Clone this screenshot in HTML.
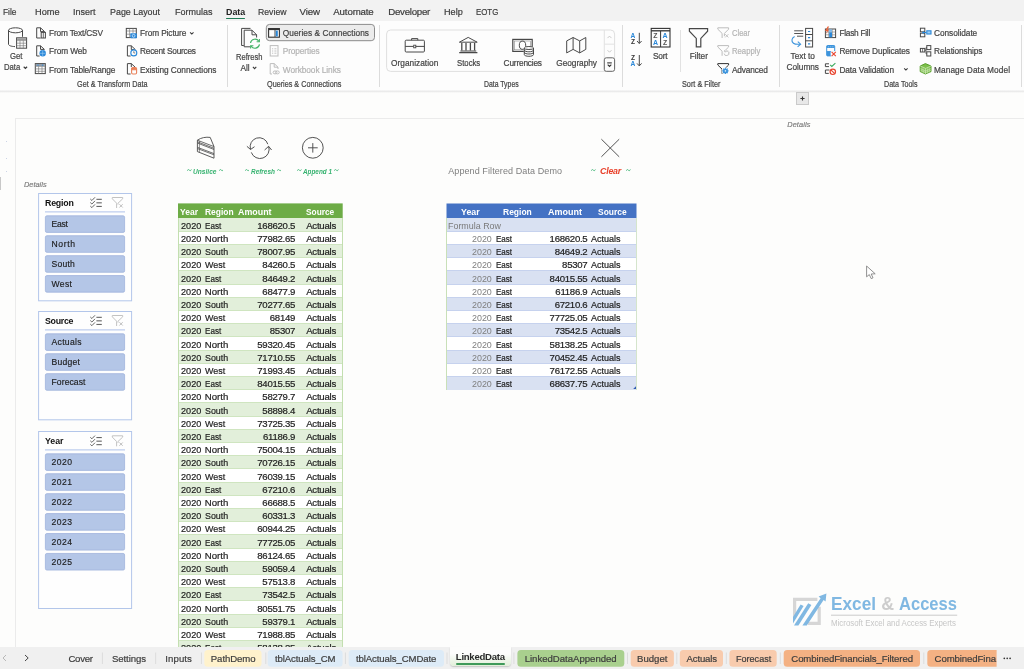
<!DOCTYPE html>
<html><head><meta charset="utf-8"><title>Excel</title>
<style>
html,body{margin:0;padding:0}
body{width:1024px;height:669px;overflow:hidden;position:relative;background:#fdfdfc;font-family:"Liberation Sans",sans-serif;}
.a{position:absolute;display:block}
.t{position:absolute;white-space:pre;line-height:1;display:block}
</style></head><body><div id="w" style="position:absolute;left:0;top:0;width:1024px;height:669px;will-change:transform">
<div class="a" style="left:0px;top:0px;width:1024px;height:21.4px;background:#f2f2f2;"></div>
<div class="a" style="left:0px;top:21.4px;width:1024px;height:70px;background:#fdfdfd;"></div>
<div class="a" style="left:0px;top:90.4px;width:1024px;height:3px;background:linear-gradient(#fdfdfd,#e7e7e7 40%,#f1f1f1 65%,#fdfdfc)"></div>
<div class="a" style="left:15px;top:118px;width:1009px;height:1px;background:#ebebeb;"></div>
<div class="a" style="left:15px;top:118px;width:1px;height:529px;background:#ebebeb;"></div>
<span class="t" style="left:2.50px;top:6.79px;font-size:9.7px;color:#3b3b3b;-webkit-text-stroke:0.2px;transform:scaleX(0.8640);transform-origin:0 0;">File</span>
<span class="t" style="left:34.50px;top:6.79px;font-size:9.7px;color:#3b3b3b;-webkit-text-stroke:0.2px;transform:scaleX(0.9480);transform-origin:0 0;">Home</span>
<span class="t" style="left:73.00px;top:6.79px;font-size:9.7px;color:#3b3b3b;-webkit-text-stroke:0.2px;transform:scaleX(0.9284);transform-origin:0 0;">Insert</span>
<span class="t" style="left:110.00px;top:6.79px;font-size:9.7px;color:#3b3b3b;-webkit-text-stroke:0.2px;transform:scaleX(0.9190);transform-origin:0 0;">Page Layout</span>
<span class="t" style="left:174.50px;top:6.79px;font-size:9.7px;color:#3b3b3b;-webkit-text-stroke:0.2px;transform:scaleX(0.9288);transform-origin:0 0;">Formulas</span>
<span class="t" style="left:258.25px;top:6.79px;font-size:9.7px;color:#3b3b3b;-webkit-text-stroke:0.2px;transform:scaleX(0.8972);transform-origin:0 0;">Review</span>
<span class="t" style="left:299.50px;top:6.79px;font-size:9.7px;color:#3b3b3b;-webkit-text-stroke:0.2px;letter-spacing:-0.109px;">View</span>
<span class="t" style="left:333.25px;top:6.79px;font-size:9.7px;color:#3b3b3b;-webkit-text-stroke:0.2px;letter-spacing:-0.138px;">Automate</span>
<span class="t" style="left:388.25px;top:6.79px;font-size:9.7px;color:#3b3b3b;-webkit-text-stroke:0.2px;letter-spacing:-0.271px;">Developer</span>
<span class="t" style="left:443.75px;top:6.79px;font-size:9.7px;color:#3b3b3b;-webkit-text-stroke:0.2px;transform:scaleX(0.9404);transform-origin:0 0;">Help</span>
<span class="t" style="left:475.75px;top:6.79px;font-size:9.7px;color:#3b3b3b;-webkit-text-stroke:0.2px;transform:scaleX(0.8105);transform-origin:0 0;">EOTG</span>
<span class="t" style="left:225.75px;top:6.79px;font-size:9.7px;color:#222;font-weight:700;transform:scaleX(0.9167);transform-origin:0 0;">Data</span>
<div class="a" style="left:226px;top:17.5px;width:19px;height:1.2px;background:#1f7a55;border-radius:1px;"></div>
<span class="t" style="left:9.75px;top:51.97px;font-size:8.3px;color:#444;-webkit-text-stroke:0.2px;transform:scaleX(0.9346);transform-origin:0 0;">Get</span>
<span class="t" style="left:3.75px;top:62.97px;font-size:8.3px;color:#444;-webkit-text-stroke:0.2px;transform:scaleX(0.9269);transform-origin:0 0;">Data</span>
<span class="t" style="left:49.00px;top:29.37px;font-size:8.3px;color:#444;-webkit-text-stroke:0.2px;letter-spacing:-0.174px;">From Text/CSV</span>
<span class="t" style="left:49.00px;top:47.37px;font-size:8.3px;color:#444;-webkit-text-stroke:0.2px;letter-spacing:-0.097px;">From Web</span>
<span class="t" style="left:49.00px;top:65.57px;font-size:8.3px;color:#444;-webkit-text-stroke:0.2px;letter-spacing:-0.124px;">From Table/Range</span>
<span class="t" style="left:140.00px;top:29.37px;font-size:8.3px;color:#444;-webkit-text-stroke:0.2px;letter-spacing:-0.099px;">From Picture</span>
<span class="t" style="left:140.00px;top:47.37px;font-size:8.3px;color:#444;-webkit-text-stroke:0.2px;letter-spacing:-0.233px;">Recent Sources</span>
<span class="t" style="left:140.00px;top:65.57px;font-size:8.3px;color:#444;-webkit-text-stroke:0.2px;letter-spacing:-0.057px;">Existing Connections</span>
<span class="t" style="left:76.50px;top:79.97px;font-size:8.3px;color:#444;-webkit-text-stroke:0.2px;transform:scaleX(0.8736);transform-origin:0 0;">Get &amp; Transform Data</span>
<div class="a" style="left:227px;top:25px;width:1px;height:62px;background:#dcdcdc;"></div>
<span class="t" style="left:235.50px;top:52.97px;font-size:8.3px;color:#444;-webkit-text-stroke:0.2px;transform:scaleX(0.9118);transform-origin:0 0;">Refresh</span>
<span class="t" style="left:240.50px;top:63.87px;font-size:8.3px;color:#444;-webkit-text-stroke:0.2px;letter-spacing:-0.067px;">All</span>
<svg class="a" style="left:260px;top:20px" width="120" height="25" viewBox="0 0 120 25" fill="none"><rect x="6.3" y="4.4" width="108.2" height="16.3" rx="3.3" fill="#ececec" stroke="#8c8c8c" stroke-width="1"/></svg>
<span class="t" style="left:282.75px;top:29.37px;font-size:8.3px;color:#444;-webkit-text-stroke:0.2px;letter-spacing:0.046px;">Queries &amp; Connections</span>
<span class="t" style="left:282.75px;top:47.37px;font-size:8.3px;color:#b4b4b4;-webkit-text-stroke:0.2px;letter-spacing:-0.109px;">Properties</span>
<span class="t" style="left:282.75px;top:65.57px;font-size:8.3px;color:#b4b4b4;-webkit-text-stroke:0.2px;letter-spacing:-0.056px;">Workbook Links</span>
<span class="t" style="left:266.50px;top:79.97px;font-size:8.3px;color:#444;-webkit-text-stroke:0.2px;transform:scaleX(0.8719);transform-origin:0 0;">Queries &amp; Connections</span>
<div class="a" style="left:379px;top:25px;width:1px;height:62px;background:#dcdcdc;"></div>
<svg class="a" style="left:380px;top:25px" width="240" height="50" viewBox="0 0 240 50" fill="none"><rect x="6.6" y="5" width="228" height="41.4" rx="4" fill="#fdfdfd" stroke="#dfdfdf" stroke-width="1"/><path d="M224.3 5V46.4M224.3 19.2H234.6" stroke="#e2e2e2" stroke-width="1"/><rect x="224.3" y="32.8" width="10.3" height="13.5" rx="2" fill="#fdfdfd" stroke="#666" stroke-width="1"/></svg>
<span class="t" style="left:391.00px;top:58.77px;font-size:8.3px;color:#444;-webkit-text-stroke:0.2px;letter-spacing:0.018px;">Organization</span>
<span class="t" style="left:457.00px;top:58.77px;font-size:8.3px;color:#444;-webkit-text-stroke:0.2px;transform:scaleX(0.9335);transform-origin:0 0;">Stocks</span>
<span class="t" style="left:503.60px;top:58.77px;font-size:8.3px;color:#444;-webkit-text-stroke:0.2px;letter-spacing:-0.192px;">Currencies</span>
<span class="t" style="left:556.25px;top:58.77px;font-size:8.3px;color:#444;-webkit-text-stroke:0.2px;letter-spacing:-0.039px;">Geography</span>
<span class="t" style="left:483.60px;top:79.97px;font-size:8.3px;color:#444;-webkit-text-stroke:0.2px;transform:scaleX(0.8284);transform-origin:0 0;">Data Types</span>
<div class="a" style="left:622px;top:25px;width:1px;height:62px;background:#dcdcdc;"></div>
<span class="t" style="left:653.00px;top:51.97px;font-size:8.3px;color:#444;-webkit-text-stroke:0.2px;letter-spacing:-0.240px;">Sort</span>
<span class="t" style="left:689.75px;top:51.97px;font-size:8.3px;color:#444;-webkit-text-stroke:0.2px;letter-spacing:-0.058px;">Filter</span>
<div class="a" style="left:679.5px;top:29.5px;width:1px;height:42.5px;background:#e2e2e2;"></div>
<span class="t" style="left:731.90px;top:29.37px;font-size:8.3px;color:#b4b4b4;-webkit-text-stroke:0.2px;transform:scaleX(0.9128);transform-origin:0 0;">Clear</span>
<span class="t" style="left:731.90px;top:47.37px;font-size:8.3px;color:#b4b4b4;-webkit-text-stroke:0.2px;transform:scaleX(0.9309);transform-origin:0 0;">Reapply</span>
<span class="t" style="left:731.90px;top:65.57px;font-size:8.3px;color:#444;-webkit-text-stroke:0.2px;letter-spacing:-0.115px;">Advanced</span>
<span class="t" style="left:681.50px;top:79.97px;font-size:8.3px;color:#444;-webkit-text-stroke:0.2px;transform:scaleX(0.8787);transform-origin:0 0;">Sort &amp; Filter</span>
<div class="a" style="left:779px;top:25px;width:1px;height:62px;background:#dcdcdc;"></div>
<span class="t" style="left:790.60px;top:51.97px;font-size:8.3px;color:#444;-webkit-text-stroke:0.2px;letter-spacing:-0.009px;">Text to</span>
<span class="t" style="left:786.50px;top:63.27px;font-size:8.3px;color:#444;-webkit-text-stroke:0.2px;letter-spacing:-0.042px;">Columns</span>
<span class="t" style="left:839.40px;top:29.37px;font-size:8.3px;color:#444;-webkit-text-stroke:0.2px;letter-spacing:-0.261px;">Flash Fill</span>
<span class="t" style="left:839.40px;top:47.37px;font-size:8.3px;color:#444;-webkit-text-stroke:0.2px;letter-spacing:-0.084px;">Remove Duplicates</span>
<span class="t" style="left:839.40px;top:65.57px;font-size:8.3px;color:#444;-webkit-text-stroke:0.2px;letter-spacing:-0.075px;">Data Validation</span>
<span class="t" style="left:934.00px;top:29.37px;font-size:8.3px;color:#444;-webkit-text-stroke:0.2px;letter-spacing:-0.058px;">Consolidate</span>
<span class="t" style="left:934.00px;top:47.37px;font-size:8.3px;color:#444;-webkit-text-stroke:0.2px;letter-spacing:-0.109px;">Relationships</span>
<span class="t" style="left:934.00px;top:65.57px;font-size:8.3px;color:#444;-webkit-text-stroke:0.2px;letter-spacing:0.080px;">Manage Data Model</span>
<span class="t" style="left:883.50px;top:79.97px;font-size:8.3px;color:#444;-webkit-text-stroke:0.2px;transform:scaleX(0.8576);transform-origin:0 0;">Data Tools</span>
<div class="a" style="left:1021px;top:25px;width:1px;height:62px;background:#dcdcdc;"></div>
<div class="a" style="left:796px;top:92px;width:13px;height:13px;background:#e8e8e8;border:1px solid #cacaca;box-sizing:border-box;"></div>
<svg class="a" style="left:800px;top:95.7px" width="5" height="5" viewBox="0 0 5 5" fill="none"><path d="M2.5 0.4V4.6M0.4 2.5H4.6" stroke="#333" stroke-width="1.1"/></svg>
<span class="t" style="left:24.00px;top:180.54px;font-size:7.4px;color:#7a7a7a;font-style:italic;-webkit-text-stroke:0.15px;">Details</span>
<span class="t" style="left:787.20px;top:121.44px;font-size:7.4px;color:#7a7a7a;font-style:italic;-webkit-text-stroke:0.15px;letter-spacing:0.118px;">Details</span>
<div class="a" style="left:0px;top:177px;width:1px;height:13px;background:#c8c8c8;"></div>
<div class="a" style="left:6px;top:141px;width:1px;height:1px;background:#ccd4e6;"></div>
<div class="a" style="left:6px;top:157.5px;width:1px;height:1px;background:#ccd4e6;"></div>
<div class="a" style="left:6px;top:170.5px;width:1px;height:1px;background:#ccd4e6;"></div>
<svg class="a" style="left:187px;top:169.2px" width="4.6" height="2.4" viewBox="0 0 4.6 2.4" fill="none"><path d="M0.2 1.7C0.9 0.3 1.7 0.3 2.3 1.1S3.7 2 4.4 0.5" stroke="#35b26f" stroke-width="0.9"/></svg>
<svg class="a" style="left:218.6px;top:169.2px" width="4.6" height="2.4" viewBox="0 0 4.6 2.4" fill="none"><path d="M0.2 1.7C0.9 0.3 1.7 0.3 2.3 1.1S3.7 2 4.4 0.5" stroke="#35b26f" stroke-width="0.9"/></svg>
<span class="t" style="left:193.30px;top:167.63px;font-size:8px;color:#35b26f;font-weight:700;font-style:italic;transform:scaleX(0.8255);transform-origin:0 0;">Unslice</span>
<svg class="a" style="left:244.8px;top:169.2px" width="4.6" height="2.4" viewBox="0 0 4.6 2.4" fill="none"><path d="M0.2 1.7C0.9 0.3 1.7 0.3 2.3 1.1S3.7 2 4.4 0.5" stroke="#35b26f" stroke-width="0.9"/></svg>
<svg class="a" style="left:276.90000000000003px;top:169.2px" width="4.6" height="2.4" viewBox="0 0 4.6 2.4" fill="none"><path d="M0.2 1.7C0.9 0.3 1.7 0.3 2.3 1.1S3.7 2 4.4 0.5" stroke="#35b26f" stroke-width="0.9"/></svg>
<span class="t" style="left:251.10px;top:167.63px;font-size:8px;color:#35b26f;font-weight:700;font-style:italic;transform:scaleX(0.8021);transform-origin:0 0;">Refresh</span>
<svg class="a" style="left:297px;top:169.2px" width="4.6" height="2.4" viewBox="0 0 4.6 2.4" fill="none"><path d="M0.2 1.7C0.9 0.3 1.7 0.3 2.3 1.1S3.7 2 4.4 0.5" stroke="#35b26f" stroke-width="0.9"/></svg>
<svg class="a" style="left:334.20000000000005px;top:169.2px" width="4.6" height="2.4" viewBox="0 0 4.6 2.4" fill="none"><path d="M0.2 1.7C0.9 0.3 1.7 0.3 2.3 1.1S3.7 2 4.4 0.5" stroke="#35b26f" stroke-width="0.9"/></svg>
<span class="t" style="left:303.30px;top:167.63px;font-size:8px;color:#35b26f;font-weight:700;font-style:italic;transform:scaleX(0.7955);transform-origin:0 0;">Append 1</span>
<span class="t" style="left:448.20px;top:166.58px;font-size:9px;color:#7e7e7e;letter-spacing:0.093px;">Append Filtered Data Demo</span>
<svg class="a" style="left:591.3px;top:169.2px" width="4.6" height="2.4" viewBox="0 0 4.6 2.4" fill="none"><path d="M0.2 1.7C0.9 0.3 1.7 0.3 2.3 1.1S3.7 2 4.4 0.5" stroke="#35b26f" stroke-width="0.9"/></svg>
<svg class="a" style="left:626.2px;top:169.2px" width="4.6" height="2.4" viewBox="0 0 4.6 2.4" fill="none"><path d="M0.2 1.7C0.9 0.3 1.7 0.3 2.3 1.1S3.7 2 4.4 0.5" stroke="#35b26f" stroke-width="0.9"/></svg>
<span class="t" style="left:600.10px;top:166.90px;font-size:8.8px;color:#e8402a;font-weight:700;font-style:italic;letter-spacing:-0.254px;">Clear</span>
<svg class="a" style="left:38px;top:192.5px" width="95" height="109.30000000000001" viewBox="0 0 95 109.30000000000001" fill="none"><rect x="0.6" y="0.5" width="93" height="107.3" fill="#fefefe" stroke="#b3c6ea" stroke-width="1"/><rect x="7" y="18.1" width="80" height="1.5" fill="#c9d6f1"/><rect x="7.4" y="22.80" width="79.2" height="16.6" rx="1.5" fill="#b4c6e7" stroke="#9fb3dc" stroke-width="0.8"/><rect x="7.4" y="42.73" width="79.2" height="16.6" rx="1.5" fill="#b4c6e7" stroke="#9fb3dc" stroke-width="0.8"/><rect x="7.4" y="62.66" width="79.2" height="16.6" rx="1.5" fill="#b4c6e7" stroke="#9fb3dc" stroke-width="0.8"/><rect x="7.4" y="82.59" width="79.2" height="16.6" rx="1.5" fill="#b4c6e7" stroke="#9fb3dc" stroke-width="0.8"/></svg>
<span class="t" style="left:45.00px;top:198.55px;font-size:8.8px;color:#111;font-weight:700;letter-spacing:-0.202px;">Region</span>
<span class="t" style="left:51.50px;top:220.12px;font-size:8.6px;color:#1c1c1c;-webkit-text-stroke:0.15px;letter-spacing:-0.234px;">East</span>
<span class="t" style="left:51.50px;top:240.05px;font-size:8.6px;color:#1c1c1c;-webkit-text-stroke:0.15px;letter-spacing:0.621px;">North</span>
<span class="t" style="left:51.50px;top:259.98px;font-size:8.6px;color:#1c1c1c;-webkit-text-stroke:0.15px;letter-spacing:0.208px;">South</span>
<span class="t" style="left:51.50px;top:279.91px;font-size:8.6px;color:#1c1c1c;-webkit-text-stroke:0.15px;letter-spacing:0.359px;">West</span>
<svg class="a" style="left:38px;top:310.5px" width="95" height="110.30000000000001" viewBox="0 0 95 110.30000000000001" fill="none"><rect x="0.6" y="0.5" width="93" height="108.3" fill="#fefefe" stroke="#b3c6ea" stroke-width="1"/><rect x="7" y="18.1" width="80" height="1.5" fill="#c9d6f1"/><rect x="7.4" y="22.80" width="79.2" height="16.6" rx="1.5" fill="#b4c6e7" stroke="#9fb3dc" stroke-width="0.8"/><rect x="7.4" y="42.73" width="79.2" height="16.6" rx="1.5" fill="#b4c6e7" stroke="#9fb3dc" stroke-width="0.8"/><rect x="7.4" y="62.66" width="79.2" height="16.6" rx="1.5" fill="#b4c6e7" stroke="#9fb3dc" stroke-width="0.8"/></svg>
<span class="t" style="left:45.00px;top:316.55px;font-size:8.8px;color:#111;font-weight:700;letter-spacing:-0.266px;">Source</span>
<span class="t" style="left:51.50px;top:338.12px;font-size:8.6px;color:#1c1c1c;-webkit-text-stroke:0.15px;letter-spacing:0.302px;">Actuals</span>
<span class="t" style="left:51.50px;top:358.05px;font-size:8.6px;color:#1c1c1c;-webkit-text-stroke:0.15px;letter-spacing:0.250px;">Budget</span>
<span class="t" style="left:51.50px;top:377.98px;font-size:8.6px;color:#1c1c1c;-webkit-text-stroke:0.15px;letter-spacing:0.080px;">Forecast</span>
<svg class="a" style="left:38px;top:430.8px" width="95" height="178.99999999999994" viewBox="0 0 95 178.99999999999994" fill="none"><rect x="0.6" y="0.5" width="93" height="177.0" fill="#fefefe" stroke="#b3c6ea" stroke-width="1"/><rect x="7" y="18.1" width="80" height="1.5" fill="#c9d6f1"/><rect x="7.4" y="22.80" width="79.2" height="16.6" rx="1.5" fill="#b4c6e7" stroke="#9fb3dc" stroke-width="0.8"/><rect x="7.4" y="42.73" width="79.2" height="16.6" rx="1.5" fill="#b4c6e7" stroke="#9fb3dc" stroke-width="0.8"/><rect x="7.4" y="62.66" width="79.2" height="16.6" rx="1.5" fill="#b4c6e7" stroke="#9fb3dc" stroke-width="0.8"/><rect x="7.4" y="82.59" width="79.2" height="16.6" rx="1.5" fill="#b4c6e7" stroke="#9fb3dc" stroke-width="0.8"/><rect x="7.4" y="102.52" width="79.2" height="16.6" rx="1.5" fill="#b4c6e7" stroke="#9fb3dc" stroke-width="0.8"/><rect x="7.4" y="122.45" width="79.2" height="16.6" rx="1.5" fill="#b4c6e7" stroke="#9fb3dc" stroke-width="0.8"/></svg>
<span class="t" style="left:45.00px;top:436.85px;font-size:8.8px;color:#111;font-weight:700;letter-spacing:-0.031px;">Year</span>
<span class="t" style="left:51.50px;top:458.42px;font-size:8.6px;color:#1c1c1c;-webkit-text-stroke:0.15px;letter-spacing:0.458px;">2020</span>
<span class="t" style="left:51.50px;top:478.35px;font-size:8.6px;color:#1c1c1c;-webkit-text-stroke:0.15px;letter-spacing:0.458px;">2021</span>
<span class="t" style="left:51.50px;top:498.28px;font-size:8.6px;color:#1c1c1c;-webkit-text-stroke:0.15px;letter-spacing:0.458px;">2022</span>
<span class="t" style="left:51.50px;top:518.21px;font-size:8.6px;color:#1c1c1c;-webkit-text-stroke:0.15px;letter-spacing:0.458px;">2023</span>
<span class="t" style="left:51.50px;top:538.14px;font-size:8.6px;color:#1c1c1c;-webkit-text-stroke:0.15px;letter-spacing:0.458px;">2024</span>
<span class="t" style="left:51.50px;top:558.07px;font-size:8.6px;color:#1c1c1c;-webkit-text-stroke:0.15px;letter-spacing:0.458px;">2025</span>
<svg class="a" style="left:178px;top:203px" width="165" height="16" viewBox="0 0 165 16" fill="none"><rect x="0" y="0.4" width="164.7" height="14.6" fill="#6dac46"/></svg>
<span class="t" style="left:180.25px;top:206.97px;font-size:9.6px;color:#fff;font-weight:700;transform:scaleX(0.8875);transform-origin:0 0;">Year</span>
<span class="t" style="left:204.70px;top:206.97px;font-size:9.6px;color:#fff;font-weight:700;transform:scaleX(0.8796);transform-origin:0 0;">Region</span>
<span class="t" style="left:237.90px;top:206.97px;font-size:9.6px;color:#fff;font-weight:700;transform:scaleX(0.9245);transform-origin:0 0;">Amount</span>
<span class="t" style="left:306.20px;top:206.97px;font-size:9.6px;color:#fff;font-weight:700;transform:scaleX(0.8669);transform-origin:0 0;">Source</span>
<div class="a" style="left:178px;top:218.0px;width:164.7px;height:13.2px;background:#e2efda;"></div>
<span class="t" style="left:180.70px;top:220.77px;font-size:9.6px;color:#1d1d1d;-webkit-text-stroke:0.2px;transform:scaleX(0.9511);transform-origin:0 0;">2020</span>
<span class="t" style="left:204.70px;top:220.77px;font-size:9.6px;color:#1d1d1d;-webkit-text-stroke:0.2px;transform:scaleX(0.8436);transform-origin:0 0;">East</span>
<span class="t" style="left:257.27px;top:220.77px;font-size:9.6px;color:#1d1d1d;-webkit-text-stroke:0.2px;letter-spacing:-0.270px;">168620.5</span>
<span class="t" style="left:306.20px;top:220.77px;font-size:9.6px;color:#1d1d1d;-webkit-text-stroke:0.2px;letter-spacing:-0.245px;">Actuals</span>
<div class="a" style="left:178px;top:231.2px;width:164.7px;height:13.2px;background:#ffffff;"></div>
<div class="a" style="left:178px;top:230.7px;width:164.7px;height:1px;background:#cfe5c0;"></div>
<span class="t" style="left:180.70px;top:233.97px;font-size:9.6px;color:#1d1d1d;-webkit-text-stroke:0.2px;transform:scaleX(0.9511);transform-origin:0 0;">2020</span>
<span class="t" style="left:204.70px;top:233.97px;font-size:9.6px;color:#1d1d1d;-webkit-text-stroke:0.2px;letter-spacing:0.058px;">North</span>
<span class="t" style="left:257.27px;top:233.97px;font-size:9.6px;color:#1d1d1d;-webkit-text-stroke:0.2px;letter-spacing:-0.270px;">77982.65</span>
<span class="t" style="left:306.20px;top:233.97px;font-size:9.6px;color:#1d1d1d;-webkit-text-stroke:0.2px;letter-spacing:-0.245px;">Actuals</span>
<div class="a" style="left:178px;top:244.4px;width:164.7px;height:13.2px;background:#e2efda;"></div>
<div class="a" style="left:178px;top:243.9px;width:164.7px;height:1px;background:#cfe5c0;"></div>
<span class="t" style="left:180.70px;top:247.17px;font-size:9.6px;color:#1d1d1d;-webkit-text-stroke:0.2px;transform:scaleX(0.9511);transform-origin:0 0;">2020</span>
<span class="t" style="left:204.70px;top:247.17px;font-size:9.6px;color:#1d1d1d;-webkit-text-stroke:0.2px;transform:scaleX(0.9251);transform-origin:0 0;">South</span>
<span class="t" style="left:257.27px;top:247.17px;font-size:9.6px;color:#1d1d1d;-webkit-text-stroke:0.2px;letter-spacing:-0.270px;">78007.95</span>
<span class="t" style="left:306.20px;top:247.17px;font-size:9.6px;color:#1d1d1d;-webkit-text-stroke:0.2px;letter-spacing:-0.245px;">Actuals</span>
<div class="a" style="left:178px;top:257.6px;width:164.7px;height:13.2px;background:#ffffff;"></div>
<div class="a" style="left:178px;top:257.1px;width:164.7px;height:1px;background:#cfe5c0;"></div>
<span class="t" style="left:180.70px;top:260.37px;font-size:9.6px;color:#1d1d1d;-webkit-text-stroke:0.2px;transform:scaleX(0.9511);transform-origin:0 0;">2020</span>
<span class="t" style="left:204.70px;top:260.37px;font-size:9.6px;color:#1d1d1d;-webkit-text-stroke:0.2px;transform:scaleX(0.9314);transform-origin:0 0;">West</span>
<span class="t" style="left:262.33px;top:260.37px;font-size:9.6px;color:#1d1d1d;-webkit-text-stroke:0.2px;letter-spacing:-0.270px;">84260.5</span>
<span class="t" style="left:306.20px;top:260.37px;font-size:9.6px;color:#1d1d1d;-webkit-text-stroke:0.2px;letter-spacing:-0.245px;">Actuals</span>
<div class="a" style="left:178px;top:270.8px;width:164.7px;height:13.2px;background:#e2efda;"></div>
<div class="a" style="left:178px;top:270.3px;width:164.7px;height:1px;background:#cfe5c0;"></div>
<span class="t" style="left:180.70px;top:273.57px;font-size:9.6px;color:#1d1d1d;-webkit-text-stroke:0.2px;transform:scaleX(0.9511);transform-origin:0 0;">2020</span>
<span class="t" style="left:204.70px;top:273.57px;font-size:9.6px;color:#1d1d1d;-webkit-text-stroke:0.2px;transform:scaleX(0.8436);transform-origin:0 0;">East</span>
<span class="t" style="left:262.33px;top:273.57px;font-size:9.6px;color:#1d1d1d;-webkit-text-stroke:0.2px;letter-spacing:-0.270px;">84649.2</span>
<span class="t" style="left:306.20px;top:273.57px;font-size:9.6px;color:#1d1d1d;-webkit-text-stroke:0.2px;letter-spacing:-0.245px;">Actuals</span>
<div class="a" style="left:178px;top:284.0px;width:164.7px;height:13.2px;background:#ffffff;"></div>
<div class="a" style="left:178px;top:283.5px;width:164.7px;height:1px;background:#cfe5c0;"></div>
<span class="t" style="left:180.70px;top:286.77px;font-size:9.6px;color:#1d1d1d;-webkit-text-stroke:0.2px;transform:scaleX(0.9511);transform-origin:0 0;">2020</span>
<span class="t" style="left:204.70px;top:286.77px;font-size:9.6px;color:#1d1d1d;-webkit-text-stroke:0.2px;letter-spacing:0.058px;">North</span>
<span class="t" style="left:262.33px;top:286.77px;font-size:9.6px;color:#1d1d1d;-webkit-text-stroke:0.2px;letter-spacing:-0.270px;">68477.9</span>
<span class="t" style="left:306.20px;top:286.77px;font-size:9.6px;color:#1d1d1d;-webkit-text-stroke:0.2px;letter-spacing:-0.245px;">Actuals</span>
<div class="a" style="left:178px;top:297.2px;width:164.7px;height:13.2px;background:#e2efda;"></div>
<div class="a" style="left:178px;top:296.7px;width:164.7px;height:1px;background:#cfe5c0;"></div>
<span class="t" style="left:180.70px;top:299.97px;font-size:9.6px;color:#1d1d1d;-webkit-text-stroke:0.2px;transform:scaleX(0.9511);transform-origin:0 0;">2020</span>
<span class="t" style="left:204.70px;top:299.97px;font-size:9.6px;color:#1d1d1d;-webkit-text-stroke:0.2px;transform:scaleX(0.9251);transform-origin:0 0;">South</span>
<span class="t" style="left:257.27px;top:299.97px;font-size:9.6px;color:#1d1d1d;-webkit-text-stroke:0.2px;letter-spacing:-0.270px;">70277.65</span>
<span class="t" style="left:306.20px;top:299.97px;font-size:9.6px;color:#1d1d1d;-webkit-text-stroke:0.2px;letter-spacing:-0.245px;">Actuals</span>
<div class="a" style="left:178px;top:310.4px;width:164.7px;height:13.2px;background:#ffffff;"></div>
<div class="a" style="left:178px;top:309.9px;width:164.7px;height:1px;background:#cfe5c0;"></div>
<span class="t" style="left:180.70px;top:313.17px;font-size:9.6px;color:#1d1d1d;-webkit-text-stroke:0.2px;transform:scaleX(0.9511);transform-origin:0 0;">2020</span>
<span class="t" style="left:204.70px;top:313.17px;font-size:9.6px;color:#1d1d1d;-webkit-text-stroke:0.2px;transform:scaleX(0.9314);transform-origin:0 0;">West</span>
<span class="t" style="left:269.79px;top:313.17px;font-size:9.6px;color:#1d1d1d;-webkit-text-stroke:0.2px;letter-spacing:-0.270px;">68149</span>
<span class="t" style="left:306.20px;top:313.17px;font-size:9.6px;color:#1d1d1d;-webkit-text-stroke:0.2px;letter-spacing:-0.245px;">Actuals</span>
<div class="a" style="left:178px;top:323.6px;width:164.7px;height:13.2px;background:#e2efda;"></div>
<div class="a" style="left:178px;top:323.1px;width:164.7px;height:1px;background:#cfe5c0;"></div>
<span class="t" style="left:180.70px;top:326.37px;font-size:9.6px;color:#1d1d1d;-webkit-text-stroke:0.2px;transform:scaleX(0.9511);transform-origin:0 0;">2020</span>
<span class="t" style="left:204.70px;top:326.37px;font-size:9.6px;color:#1d1d1d;-webkit-text-stroke:0.2px;transform:scaleX(0.8436);transform-origin:0 0;">East</span>
<span class="t" style="left:269.79px;top:326.37px;font-size:9.6px;color:#1d1d1d;-webkit-text-stroke:0.2px;letter-spacing:-0.270px;">85307</span>
<span class="t" style="left:306.20px;top:326.37px;font-size:9.6px;color:#1d1d1d;-webkit-text-stroke:0.2px;letter-spacing:-0.245px;">Actuals</span>
<div class="a" style="left:178px;top:336.8px;width:164.7px;height:13.2px;background:#ffffff;"></div>
<div class="a" style="left:178px;top:336.3px;width:164.7px;height:1px;background:#cfe5c0;"></div>
<span class="t" style="left:180.70px;top:339.57px;font-size:9.6px;color:#1d1d1d;-webkit-text-stroke:0.2px;transform:scaleX(0.9511);transform-origin:0 0;">2020</span>
<span class="t" style="left:204.70px;top:339.57px;font-size:9.6px;color:#1d1d1d;-webkit-text-stroke:0.2px;letter-spacing:0.058px;">North</span>
<span class="t" style="left:257.27px;top:339.57px;font-size:9.6px;color:#1d1d1d;-webkit-text-stroke:0.2px;letter-spacing:-0.270px;">59320.45</span>
<span class="t" style="left:306.20px;top:339.57px;font-size:9.6px;color:#1d1d1d;-webkit-text-stroke:0.2px;letter-spacing:-0.245px;">Actuals</span>
<div class="a" style="left:178px;top:350.0px;width:164.7px;height:13.2px;background:#e2efda;"></div>
<div class="a" style="left:178px;top:349.5px;width:164.7px;height:1px;background:#cfe5c0;"></div>
<span class="t" style="left:180.70px;top:352.77px;font-size:9.6px;color:#1d1d1d;-webkit-text-stroke:0.2px;transform:scaleX(0.9511);transform-origin:0 0;">2020</span>
<span class="t" style="left:204.70px;top:352.77px;font-size:9.6px;color:#1d1d1d;-webkit-text-stroke:0.2px;transform:scaleX(0.9251);transform-origin:0 0;">South</span>
<span class="t" style="left:257.27px;top:352.77px;font-size:9.6px;color:#1d1d1d;-webkit-text-stroke:0.2px;letter-spacing:-0.270px;">71710.55</span>
<span class="t" style="left:306.20px;top:352.77px;font-size:9.6px;color:#1d1d1d;-webkit-text-stroke:0.2px;letter-spacing:-0.245px;">Actuals</span>
<div class="a" style="left:178px;top:363.2px;width:164.7px;height:13.2px;background:#ffffff;"></div>
<div class="a" style="left:178px;top:362.7px;width:164.7px;height:1px;background:#cfe5c0;"></div>
<span class="t" style="left:180.70px;top:365.97px;font-size:9.6px;color:#1d1d1d;-webkit-text-stroke:0.2px;transform:scaleX(0.9511);transform-origin:0 0;">2020</span>
<span class="t" style="left:204.70px;top:365.97px;font-size:9.6px;color:#1d1d1d;-webkit-text-stroke:0.2px;transform:scaleX(0.9314);transform-origin:0 0;">West</span>
<span class="t" style="left:257.27px;top:365.97px;font-size:9.6px;color:#1d1d1d;-webkit-text-stroke:0.2px;letter-spacing:-0.270px;">71993.45</span>
<span class="t" style="left:306.20px;top:365.97px;font-size:9.6px;color:#1d1d1d;-webkit-text-stroke:0.2px;letter-spacing:-0.245px;">Actuals</span>
<div class="a" style="left:178px;top:376.4px;width:164.7px;height:13.2px;background:#e2efda;"></div>
<div class="a" style="left:178px;top:375.9px;width:164.7px;height:1px;background:#cfe5c0;"></div>
<span class="t" style="left:180.70px;top:379.17px;font-size:9.6px;color:#1d1d1d;-webkit-text-stroke:0.2px;transform:scaleX(0.9511);transform-origin:0 0;">2020</span>
<span class="t" style="left:204.70px;top:379.17px;font-size:9.6px;color:#1d1d1d;-webkit-text-stroke:0.2px;transform:scaleX(0.8436);transform-origin:0 0;">East</span>
<span class="t" style="left:257.27px;top:379.17px;font-size:9.6px;color:#1d1d1d;-webkit-text-stroke:0.2px;letter-spacing:-0.270px;">84015.55</span>
<span class="t" style="left:306.20px;top:379.17px;font-size:9.6px;color:#1d1d1d;-webkit-text-stroke:0.2px;letter-spacing:-0.245px;">Actuals</span>
<div class="a" style="left:178px;top:389.6px;width:164.7px;height:13.2px;background:#ffffff;"></div>
<div class="a" style="left:178px;top:389.1px;width:164.7px;height:1px;background:#cfe5c0;"></div>
<span class="t" style="left:180.70px;top:392.37px;font-size:9.6px;color:#1d1d1d;-webkit-text-stroke:0.2px;transform:scaleX(0.9511);transform-origin:0 0;">2020</span>
<span class="t" style="left:204.70px;top:392.37px;font-size:9.6px;color:#1d1d1d;-webkit-text-stroke:0.2px;letter-spacing:0.058px;">North</span>
<span class="t" style="left:262.33px;top:392.37px;font-size:9.6px;color:#1d1d1d;-webkit-text-stroke:0.2px;letter-spacing:-0.270px;">58279.7</span>
<span class="t" style="left:306.20px;top:392.37px;font-size:9.6px;color:#1d1d1d;-webkit-text-stroke:0.2px;letter-spacing:-0.245px;">Actuals</span>
<div class="a" style="left:178px;top:402.79999999999995px;width:164.7px;height:13.2px;background:#e2efda;"></div>
<div class="a" style="left:178px;top:402.29999999999995px;width:164.7px;height:1px;background:#cfe5c0;"></div>
<span class="t" style="left:180.70px;top:405.57px;font-size:9.6px;color:#1d1d1d;-webkit-text-stroke:0.2px;transform:scaleX(0.9511);transform-origin:0 0;">2020</span>
<span class="t" style="left:204.70px;top:405.57px;font-size:9.6px;color:#1d1d1d;-webkit-text-stroke:0.2px;transform:scaleX(0.9251);transform-origin:0 0;">South</span>
<span class="t" style="left:262.33px;top:405.57px;font-size:9.6px;color:#1d1d1d;-webkit-text-stroke:0.2px;letter-spacing:-0.270px;">58898.4</span>
<span class="t" style="left:306.20px;top:405.57px;font-size:9.6px;color:#1d1d1d;-webkit-text-stroke:0.2px;letter-spacing:-0.245px;">Actuals</span>
<div class="a" style="left:178px;top:416.0px;width:164.7px;height:13.2px;background:#ffffff;"></div>
<div class="a" style="left:178px;top:415.5px;width:164.7px;height:1px;background:#cfe5c0;"></div>
<span class="t" style="left:180.70px;top:418.77px;font-size:9.6px;color:#1d1d1d;-webkit-text-stroke:0.2px;transform:scaleX(0.9511);transform-origin:0 0;">2020</span>
<span class="t" style="left:204.70px;top:418.77px;font-size:9.6px;color:#1d1d1d;-webkit-text-stroke:0.2px;transform:scaleX(0.9314);transform-origin:0 0;">West</span>
<span class="t" style="left:257.27px;top:418.77px;font-size:9.6px;color:#1d1d1d;-webkit-text-stroke:0.2px;letter-spacing:-0.270px;">73725.35</span>
<span class="t" style="left:306.20px;top:418.77px;font-size:9.6px;color:#1d1d1d;-webkit-text-stroke:0.2px;letter-spacing:-0.245px;">Actuals</span>
<div class="a" style="left:178px;top:429.2px;width:164.7px;height:13.2px;background:#e2efda;"></div>
<div class="a" style="left:178px;top:428.7px;width:164.7px;height:1px;background:#cfe5c0;"></div>
<span class="t" style="left:180.70px;top:431.97px;font-size:9.6px;color:#1d1d1d;-webkit-text-stroke:0.2px;transform:scaleX(0.9511);transform-origin:0 0;">2020</span>
<span class="t" style="left:204.70px;top:431.97px;font-size:9.6px;color:#1d1d1d;-webkit-text-stroke:0.2px;transform:scaleX(0.8436);transform-origin:0 0;">East</span>
<span class="t" style="left:263.05px;top:431.97px;font-size:9.6px;color:#1d1d1d;-webkit-text-stroke:0.2px;letter-spacing:-0.270px;">61186.9</span>
<span class="t" style="left:306.20px;top:431.97px;font-size:9.6px;color:#1d1d1d;-webkit-text-stroke:0.2px;letter-spacing:-0.245px;">Actuals</span>
<div class="a" style="left:178px;top:442.4px;width:164.7px;height:13.2px;background:#ffffff;"></div>
<div class="a" style="left:178px;top:441.9px;width:164.7px;height:1px;background:#cfe5c0;"></div>
<span class="t" style="left:180.70px;top:445.17px;font-size:9.6px;color:#1d1d1d;-webkit-text-stroke:0.2px;transform:scaleX(0.9511);transform-origin:0 0;">2020</span>
<span class="t" style="left:204.70px;top:445.17px;font-size:9.6px;color:#1d1d1d;-webkit-text-stroke:0.2px;letter-spacing:0.058px;">North</span>
<span class="t" style="left:257.27px;top:445.17px;font-size:9.6px;color:#1d1d1d;-webkit-text-stroke:0.2px;letter-spacing:-0.270px;">75004.15</span>
<span class="t" style="left:306.20px;top:445.17px;font-size:9.6px;color:#1d1d1d;-webkit-text-stroke:0.2px;letter-spacing:-0.245px;">Actuals</span>
<div class="a" style="left:178px;top:455.6px;width:164.7px;height:13.2px;background:#e2efda;"></div>
<div class="a" style="left:178px;top:455.1px;width:164.7px;height:1px;background:#cfe5c0;"></div>
<span class="t" style="left:180.70px;top:458.37px;font-size:9.6px;color:#1d1d1d;-webkit-text-stroke:0.2px;transform:scaleX(0.9511);transform-origin:0 0;">2020</span>
<span class="t" style="left:204.70px;top:458.37px;font-size:9.6px;color:#1d1d1d;-webkit-text-stroke:0.2px;transform:scaleX(0.9251);transform-origin:0 0;">South</span>
<span class="t" style="left:257.27px;top:458.37px;font-size:9.6px;color:#1d1d1d;-webkit-text-stroke:0.2px;letter-spacing:-0.270px;">70726.15</span>
<span class="t" style="left:306.20px;top:458.37px;font-size:9.6px;color:#1d1d1d;-webkit-text-stroke:0.2px;letter-spacing:-0.245px;">Actuals</span>
<div class="a" style="left:178px;top:468.79999999999995px;width:164.7px;height:13.2px;background:#ffffff;"></div>
<div class="a" style="left:178px;top:468.29999999999995px;width:164.7px;height:1px;background:#cfe5c0;"></div>
<span class="t" style="left:180.70px;top:471.57px;font-size:9.6px;color:#1d1d1d;-webkit-text-stroke:0.2px;transform:scaleX(0.9511);transform-origin:0 0;">2020</span>
<span class="t" style="left:204.70px;top:471.57px;font-size:9.6px;color:#1d1d1d;-webkit-text-stroke:0.2px;transform:scaleX(0.9314);transform-origin:0 0;">West</span>
<span class="t" style="left:257.27px;top:471.57px;font-size:9.6px;color:#1d1d1d;-webkit-text-stroke:0.2px;letter-spacing:-0.270px;">76039.15</span>
<span class="t" style="left:306.20px;top:471.57px;font-size:9.6px;color:#1d1d1d;-webkit-text-stroke:0.2px;letter-spacing:-0.245px;">Actuals</span>
<div class="a" style="left:178px;top:482.0px;width:164.7px;height:13.2px;background:#e2efda;"></div>
<div class="a" style="left:178px;top:481.5px;width:164.7px;height:1px;background:#cfe5c0;"></div>
<span class="t" style="left:180.70px;top:484.77px;font-size:9.6px;color:#1d1d1d;-webkit-text-stroke:0.2px;transform:scaleX(0.9511);transform-origin:0 0;">2020</span>
<span class="t" style="left:204.70px;top:484.77px;font-size:9.6px;color:#1d1d1d;-webkit-text-stroke:0.2px;transform:scaleX(0.8436);transform-origin:0 0;">East</span>
<span class="t" style="left:262.33px;top:484.77px;font-size:9.6px;color:#1d1d1d;-webkit-text-stroke:0.2px;letter-spacing:-0.270px;">67210.6</span>
<span class="t" style="left:306.20px;top:484.77px;font-size:9.6px;color:#1d1d1d;-webkit-text-stroke:0.2px;letter-spacing:-0.245px;">Actuals</span>
<div class="a" style="left:178px;top:495.2px;width:164.7px;height:13.2px;background:#ffffff;"></div>
<div class="a" style="left:178px;top:494.7px;width:164.7px;height:1px;background:#cfe5c0;"></div>
<span class="t" style="left:180.70px;top:497.97px;font-size:9.6px;color:#1d1d1d;-webkit-text-stroke:0.2px;transform:scaleX(0.9511);transform-origin:0 0;">2020</span>
<span class="t" style="left:204.70px;top:497.97px;font-size:9.6px;color:#1d1d1d;-webkit-text-stroke:0.2px;letter-spacing:0.058px;">North</span>
<span class="t" style="left:262.33px;top:497.97px;font-size:9.6px;color:#1d1d1d;-webkit-text-stroke:0.2px;letter-spacing:-0.270px;">66688.5</span>
<span class="t" style="left:306.20px;top:497.97px;font-size:9.6px;color:#1d1d1d;-webkit-text-stroke:0.2px;letter-spacing:-0.245px;">Actuals</span>
<div class="a" style="left:178px;top:508.4px;width:164.7px;height:13.2px;background:#e2efda;"></div>
<div class="a" style="left:178px;top:507.9px;width:164.7px;height:1px;background:#cfe5c0;"></div>
<span class="t" style="left:180.70px;top:511.17px;font-size:9.6px;color:#1d1d1d;-webkit-text-stroke:0.2px;transform:scaleX(0.9511);transform-origin:0 0;">2020</span>
<span class="t" style="left:204.70px;top:511.17px;font-size:9.6px;color:#1d1d1d;-webkit-text-stroke:0.2px;transform:scaleX(0.9251);transform-origin:0 0;">South</span>
<span class="t" style="left:262.33px;top:511.17px;font-size:9.6px;color:#1d1d1d;-webkit-text-stroke:0.2px;letter-spacing:-0.270px;">60331.3</span>
<span class="t" style="left:306.20px;top:511.17px;font-size:9.6px;color:#1d1d1d;-webkit-text-stroke:0.2px;letter-spacing:-0.245px;">Actuals</span>
<div class="a" style="left:178px;top:521.5999999999999px;width:164.7px;height:13.2px;background:#ffffff;"></div>
<div class="a" style="left:178px;top:521.0999999999999px;width:164.7px;height:1px;background:#cfe5c0;"></div>
<span class="t" style="left:180.70px;top:524.37px;font-size:9.6px;color:#1d1d1d;-webkit-text-stroke:0.2px;transform:scaleX(0.9511);transform-origin:0 0;">2020</span>
<span class="t" style="left:204.70px;top:524.37px;font-size:9.6px;color:#1d1d1d;-webkit-text-stroke:0.2px;transform:scaleX(0.9314);transform-origin:0 0;">West</span>
<span class="t" style="left:257.27px;top:524.37px;font-size:9.6px;color:#1d1d1d;-webkit-text-stroke:0.2px;letter-spacing:-0.270px;">60944.25</span>
<span class="t" style="left:306.20px;top:524.37px;font-size:9.6px;color:#1d1d1d;-webkit-text-stroke:0.2px;letter-spacing:-0.245px;">Actuals</span>
<div class="a" style="left:178px;top:534.8px;width:164.7px;height:13.2px;background:#e2efda;"></div>
<div class="a" style="left:178px;top:534.3px;width:164.7px;height:1px;background:#cfe5c0;"></div>
<span class="t" style="left:180.70px;top:537.57px;font-size:9.6px;color:#1d1d1d;-webkit-text-stroke:0.2px;transform:scaleX(0.9511);transform-origin:0 0;">2020</span>
<span class="t" style="left:204.70px;top:537.57px;font-size:9.6px;color:#1d1d1d;-webkit-text-stroke:0.2px;transform:scaleX(0.8436);transform-origin:0 0;">East</span>
<span class="t" style="left:257.27px;top:537.57px;font-size:9.6px;color:#1d1d1d;-webkit-text-stroke:0.2px;letter-spacing:-0.270px;">77725.05</span>
<span class="t" style="left:306.20px;top:537.57px;font-size:9.6px;color:#1d1d1d;-webkit-text-stroke:0.2px;letter-spacing:-0.245px;">Actuals</span>
<div class="a" style="left:178px;top:548.0px;width:164.7px;height:13.2px;background:#ffffff;"></div>
<div class="a" style="left:178px;top:547.5px;width:164.7px;height:1px;background:#cfe5c0;"></div>
<span class="t" style="left:180.70px;top:550.77px;font-size:9.6px;color:#1d1d1d;-webkit-text-stroke:0.2px;transform:scaleX(0.9511);transform-origin:0 0;">2020</span>
<span class="t" style="left:204.70px;top:550.77px;font-size:9.6px;color:#1d1d1d;-webkit-text-stroke:0.2px;letter-spacing:0.058px;">North</span>
<span class="t" style="left:257.27px;top:550.77px;font-size:9.6px;color:#1d1d1d;-webkit-text-stroke:0.2px;letter-spacing:-0.270px;">86124.65</span>
<span class="t" style="left:306.20px;top:550.77px;font-size:9.6px;color:#1d1d1d;-webkit-text-stroke:0.2px;letter-spacing:-0.245px;">Actuals</span>
<div class="a" style="left:178px;top:561.2px;width:164.7px;height:13.2px;background:#e2efda;"></div>
<div class="a" style="left:178px;top:560.7px;width:164.7px;height:1px;background:#cfe5c0;"></div>
<span class="t" style="left:180.70px;top:563.97px;font-size:9.6px;color:#1d1d1d;-webkit-text-stroke:0.2px;transform:scaleX(0.9511);transform-origin:0 0;">2020</span>
<span class="t" style="left:204.70px;top:563.97px;font-size:9.6px;color:#1d1d1d;-webkit-text-stroke:0.2px;transform:scaleX(0.9251);transform-origin:0 0;">South</span>
<span class="t" style="left:262.33px;top:563.97px;font-size:9.6px;color:#1d1d1d;-webkit-text-stroke:0.2px;letter-spacing:-0.270px;">59059.4</span>
<span class="t" style="left:306.20px;top:563.97px;font-size:9.6px;color:#1d1d1d;-webkit-text-stroke:0.2px;letter-spacing:-0.245px;">Actuals</span>
<div class="a" style="left:178px;top:574.4px;width:164.7px;height:13.2px;background:#ffffff;"></div>
<div class="a" style="left:178px;top:573.9px;width:164.7px;height:1px;background:#cfe5c0;"></div>
<span class="t" style="left:180.70px;top:577.17px;font-size:9.6px;color:#1d1d1d;-webkit-text-stroke:0.2px;transform:scaleX(0.9511);transform-origin:0 0;">2020</span>
<span class="t" style="left:204.70px;top:577.17px;font-size:9.6px;color:#1d1d1d;-webkit-text-stroke:0.2px;transform:scaleX(0.9314);transform-origin:0 0;">West</span>
<span class="t" style="left:262.33px;top:577.17px;font-size:9.6px;color:#1d1d1d;-webkit-text-stroke:0.2px;letter-spacing:-0.270px;">57513.8</span>
<span class="t" style="left:306.20px;top:577.17px;font-size:9.6px;color:#1d1d1d;-webkit-text-stroke:0.2px;letter-spacing:-0.245px;">Actuals</span>
<div class="a" style="left:178px;top:587.5999999999999px;width:164.7px;height:13.2px;background:#e2efda;"></div>
<div class="a" style="left:178px;top:587.0999999999999px;width:164.7px;height:1px;background:#cfe5c0;"></div>
<span class="t" style="left:180.70px;top:590.37px;font-size:9.6px;color:#1d1d1d;-webkit-text-stroke:0.2px;transform:scaleX(0.9511);transform-origin:0 0;">2020</span>
<span class="t" style="left:204.70px;top:590.37px;font-size:9.6px;color:#1d1d1d;-webkit-text-stroke:0.2px;transform:scaleX(0.8436);transform-origin:0 0;">East</span>
<span class="t" style="left:262.33px;top:590.37px;font-size:9.6px;color:#1d1d1d;-webkit-text-stroke:0.2px;letter-spacing:-0.270px;">73542.5</span>
<span class="t" style="left:306.20px;top:590.37px;font-size:9.6px;color:#1d1d1d;-webkit-text-stroke:0.2px;letter-spacing:-0.245px;">Actuals</span>
<div class="a" style="left:178px;top:600.8px;width:164.7px;height:13.2px;background:#ffffff;"></div>
<div class="a" style="left:178px;top:600.3px;width:164.7px;height:1px;background:#cfe5c0;"></div>
<span class="t" style="left:180.70px;top:603.57px;font-size:9.6px;color:#1d1d1d;-webkit-text-stroke:0.2px;transform:scaleX(0.9511);transform-origin:0 0;">2020</span>
<span class="t" style="left:204.70px;top:603.57px;font-size:9.6px;color:#1d1d1d;-webkit-text-stroke:0.2px;letter-spacing:0.058px;">North</span>
<span class="t" style="left:257.27px;top:603.57px;font-size:9.6px;color:#1d1d1d;-webkit-text-stroke:0.2px;letter-spacing:-0.270px;">80551.75</span>
<span class="t" style="left:306.20px;top:603.57px;font-size:9.6px;color:#1d1d1d;-webkit-text-stroke:0.2px;letter-spacing:-0.245px;">Actuals</span>
<div class="a" style="left:178px;top:614.0px;width:164.7px;height:13.2px;background:#e2efda;"></div>
<div class="a" style="left:178px;top:613.5px;width:164.7px;height:1px;background:#cfe5c0;"></div>
<span class="t" style="left:180.70px;top:616.77px;font-size:9.6px;color:#1d1d1d;-webkit-text-stroke:0.2px;transform:scaleX(0.9511);transform-origin:0 0;">2020</span>
<span class="t" style="left:204.70px;top:616.77px;font-size:9.6px;color:#1d1d1d;-webkit-text-stroke:0.2px;transform:scaleX(0.9251);transform-origin:0 0;">South</span>
<span class="t" style="left:262.33px;top:616.77px;font-size:9.6px;color:#1d1d1d;-webkit-text-stroke:0.2px;letter-spacing:-0.270px;">59379.1</span>
<span class="t" style="left:306.20px;top:616.77px;font-size:9.6px;color:#1d1d1d;-webkit-text-stroke:0.2px;letter-spacing:-0.245px;">Actuals</span>
<div class="a" style="left:178px;top:627.2px;width:164.7px;height:13.2px;background:#ffffff;"></div>
<div class="a" style="left:178px;top:626.7px;width:164.7px;height:1px;background:#cfe5c0;"></div>
<span class="t" style="left:180.70px;top:629.97px;font-size:9.6px;color:#1d1d1d;-webkit-text-stroke:0.2px;transform:scaleX(0.9511);transform-origin:0 0;">2020</span>
<span class="t" style="left:204.70px;top:629.97px;font-size:9.6px;color:#1d1d1d;-webkit-text-stroke:0.2px;transform:scaleX(0.9314);transform-origin:0 0;">West</span>
<span class="t" style="left:257.27px;top:629.97px;font-size:9.6px;color:#1d1d1d;-webkit-text-stroke:0.2px;letter-spacing:-0.270px;">71988.85</span>
<span class="t" style="left:306.20px;top:629.97px;font-size:9.6px;color:#1d1d1d;-webkit-text-stroke:0.2px;letter-spacing:-0.245px;">Actuals</span>
<div class="a" style="left:178px;top:640.4px;width:164.7px;height:6.600000000000023px;background:#e2efda;"></div>
<div class="a" style="left:178px;top:639.9px;width:164.7px;height:1px;background:#cfe5c0;"></div>
<span class="t" style="left:180.70px;top:643.17px;font-size:9.6px;color:#1d1d1d;-webkit-text-stroke:0.2px;transform:scaleX(0.9511);transform-origin:0 0;">2020</span>
<span class="t" style="left:204.70px;top:643.17px;font-size:9.6px;color:#1d1d1d;-webkit-text-stroke:0.2px;transform:scaleX(0.8436);transform-origin:0 0;">East</span>
<span class="t" style="left:257.27px;top:643.17px;font-size:9.6px;color:#1d1d1d;-webkit-text-stroke:0.2px;letter-spacing:-0.270px;">58138.25</span>
<span class="t" style="left:306.20px;top:643.17px;font-size:9.6px;color:#1d1d1d;-webkit-text-stroke:0.2px;letter-spacing:-0.245px;">Actuals</span>
<div class="a" style="left:178px;top:218px;width:0.8px;height:429px;background:#c3dfb0;"></div>
<div class="a" style="left:341.9px;top:218px;width:0.8px;height:429px;background:#c3dfb0;"></div>
<svg class="a" style="left:446px;top:203px" width="191" height="16" viewBox="0 0 191 16" fill="none"><rect x="0.5" y="0.5" width="190" height="14.5" fill="#4472c4"/></svg>
<span class="t" style="left:461.00px;top:206.97px;font-size:9.6px;color:#fff;font-weight:700;transform:scaleX(0.9171);transform-origin:0 0;">Year</span>
<span class="t" style="left:503.20px;top:206.97px;font-size:9.6px;color:#fff;font-weight:700;transform:scaleX(0.8857);transform-origin:0 0;">Region</span>
<span class="t" style="left:547.90px;top:206.97px;font-size:9.6px;color:#fff;font-weight:700;transform:scaleX(0.9383);transform-origin:0 0;">Amount</span>
<span class="t" style="left:598.30px;top:206.97px;font-size:9.6px;color:#fff;font-weight:700;transform:scaleX(0.8792);transform-origin:0 0;">Source</span>
<div class="a" style="left:446.5px;top:218px;width:190.0px;height:13.2px;background:#d9e1f2;"></div>
<span class="t" style="left:448.40px;top:220.87px;font-size:9.6px;color:#7a7a7a;transform:scaleX(0.9291);transform-origin:0 0;">Formula Row</span>
<div class="a" style="left:446.5px;top:231.2px;width:190.0px;height:13.2px;background:#ffffff;"></div>
<div class="a" style="left:446.5px;top:230.7px;width:190.0px;height:1px;background:#c6d2ee;"></div>
<span class="t" style="left:471.90px;top:233.97px;font-size:9.6px;color:#7f7f7f;transform:scaleX(0.9277);transform-origin:0 0;">2020</span>
<span class="t" style="left:495.70px;top:233.97px;font-size:9.6px;color:#1d1d1d;-webkit-text-stroke:0.2px;transform:scaleX(0.8384);transform-origin:0 0;">East</span>
<span class="t" style="left:549.57px;top:233.97px;font-size:9.6px;color:#1d1d1d;-webkit-text-stroke:0.2px;letter-spacing:-0.270px;">168620.5</span>
<span class="t" style="left:591.00px;top:233.97px;font-size:9.6px;color:#1d1d1d;-webkit-text-stroke:0.2px;transform:scaleX(0.9406);transform-origin:0 0;">Actuals</span>
<div class="a" style="left:446.5px;top:244.4px;width:190.0px;height:13.2px;background:#d9e1f2;"></div>
<div class="a" style="left:446.5px;top:243.9px;width:190.0px;height:1px;background:#c6d2ee;"></div>
<span class="t" style="left:471.90px;top:247.17px;font-size:9.6px;color:#7f7f7f;transform:scaleX(0.9277);transform-origin:0 0;">2020</span>
<span class="t" style="left:495.70px;top:247.17px;font-size:9.6px;color:#1d1d1d;-webkit-text-stroke:0.2px;transform:scaleX(0.8384);transform-origin:0 0;">East</span>
<span class="t" style="left:554.63px;top:247.17px;font-size:9.6px;color:#1d1d1d;-webkit-text-stroke:0.2px;letter-spacing:-0.270px;">84649.2</span>
<span class="t" style="left:591.00px;top:247.17px;font-size:9.6px;color:#1d1d1d;-webkit-text-stroke:0.2px;transform:scaleX(0.9406);transform-origin:0 0;">Actuals</span>
<div class="a" style="left:446.5px;top:257.6px;width:190.0px;height:13.2px;background:#ffffff;"></div>
<div class="a" style="left:446.5px;top:257.1px;width:190.0px;height:1px;background:#c6d2ee;"></div>
<span class="t" style="left:471.90px;top:260.37px;font-size:9.6px;color:#7f7f7f;transform:scaleX(0.9277);transform-origin:0 0;">2020</span>
<span class="t" style="left:495.70px;top:260.37px;font-size:9.6px;color:#1d1d1d;-webkit-text-stroke:0.2px;transform:scaleX(0.8384);transform-origin:0 0;">East</span>
<span class="t" style="left:562.09px;top:260.37px;font-size:9.6px;color:#1d1d1d;-webkit-text-stroke:0.2px;letter-spacing:-0.270px;">85307</span>
<span class="t" style="left:591.00px;top:260.37px;font-size:9.6px;color:#1d1d1d;-webkit-text-stroke:0.2px;transform:scaleX(0.9406);transform-origin:0 0;">Actuals</span>
<div class="a" style="left:446.5px;top:270.8px;width:190.0px;height:13.2px;background:#d9e1f2;"></div>
<div class="a" style="left:446.5px;top:270.3px;width:190.0px;height:1px;background:#c6d2ee;"></div>
<span class="t" style="left:471.90px;top:273.57px;font-size:9.6px;color:#7f7f7f;transform:scaleX(0.9277);transform-origin:0 0;">2020</span>
<span class="t" style="left:495.70px;top:273.57px;font-size:9.6px;color:#1d1d1d;-webkit-text-stroke:0.2px;transform:scaleX(0.8384);transform-origin:0 0;">East</span>
<span class="t" style="left:549.57px;top:273.57px;font-size:9.6px;color:#1d1d1d;-webkit-text-stroke:0.2px;letter-spacing:-0.270px;">84015.55</span>
<span class="t" style="left:591.00px;top:273.57px;font-size:9.6px;color:#1d1d1d;-webkit-text-stroke:0.2px;transform:scaleX(0.9406);transform-origin:0 0;">Actuals</span>
<div class="a" style="left:446.5px;top:284.0px;width:190.0px;height:13.2px;background:#ffffff;"></div>
<div class="a" style="left:446.5px;top:283.5px;width:190.0px;height:1px;background:#c6d2ee;"></div>
<span class="t" style="left:471.90px;top:286.77px;font-size:9.6px;color:#7f7f7f;transform:scaleX(0.9277);transform-origin:0 0;">2020</span>
<span class="t" style="left:495.70px;top:286.77px;font-size:9.6px;color:#1d1d1d;-webkit-text-stroke:0.2px;transform:scaleX(0.8384);transform-origin:0 0;">East</span>
<span class="t" style="left:555.35px;top:286.77px;font-size:9.6px;color:#1d1d1d;-webkit-text-stroke:0.2px;letter-spacing:-0.270px;">61186.9</span>
<span class="t" style="left:591.00px;top:286.77px;font-size:9.6px;color:#1d1d1d;-webkit-text-stroke:0.2px;transform:scaleX(0.9406);transform-origin:0 0;">Actuals</span>
<div class="a" style="left:446.5px;top:297.2px;width:190.0px;height:13.2px;background:#d9e1f2;"></div>
<div class="a" style="left:446.5px;top:296.7px;width:190.0px;height:1px;background:#c6d2ee;"></div>
<span class="t" style="left:471.90px;top:299.97px;font-size:9.6px;color:#7f7f7f;transform:scaleX(0.9277);transform-origin:0 0;">2020</span>
<span class="t" style="left:495.70px;top:299.97px;font-size:9.6px;color:#1d1d1d;-webkit-text-stroke:0.2px;transform:scaleX(0.8384);transform-origin:0 0;">East</span>
<span class="t" style="left:554.63px;top:299.97px;font-size:9.6px;color:#1d1d1d;-webkit-text-stroke:0.2px;letter-spacing:-0.270px;">67210.6</span>
<span class="t" style="left:591.00px;top:299.97px;font-size:9.6px;color:#1d1d1d;-webkit-text-stroke:0.2px;transform:scaleX(0.9406);transform-origin:0 0;">Actuals</span>
<div class="a" style="left:446.5px;top:310.4px;width:190.0px;height:13.2px;background:#ffffff;"></div>
<div class="a" style="left:446.5px;top:309.9px;width:190.0px;height:1px;background:#c6d2ee;"></div>
<span class="t" style="left:471.90px;top:313.17px;font-size:9.6px;color:#7f7f7f;transform:scaleX(0.9277);transform-origin:0 0;">2020</span>
<span class="t" style="left:495.70px;top:313.17px;font-size:9.6px;color:#1d1d1d;-webkit-text-stroke:0.2px;transform:scaleX(0.8384);transform-origin:0 0;">East</span>
<span class="t" style="left:549.57px;top:313.17px;font-size:9.6px;color:#1d1d1d;-webkit-text-stroke:0.2px;letter-spacing:-0.270px;">77725.05</span>
<span class="t" style="left:591.00px;top:313.17px;font-size:9.6px;color:#1d1d1d;-webkit-text-stroke:0.2px;transform:scaleX(0.9406);transform-origin:0 0;">Actuals</span>
<div class="a" style="left:446.5px;top:323.6px;width:190.0px;height:13.2px;background:#d9e1f2;"></div>
<div class="a" style="left:446.5px;top:323.1px;width:190.0px;height:1px;background:#c6d2ee;"></div>
<span class="t" style="left:471.90px;top:326.37px;font-size:9.6px;color:#7f7f7f;transform:scaleX(0.9277);transform-origin:0 0;">2020</span>
<span class="t" style="left:495.70px;top:326.37px;font-size:9.6px;color:#1d1d1d;-webkit-text-stroke:0.2px;transform:scaleX(0.8384);transform-origin:0 0;">East</span>
<span class="t" style="left:554.63px;top:326.37px;font-size:9.6px;color:#1d1d1d;-webkit-text-stroke:0.2px;letter-spacing:-0.270px;">73542.5</span>
<span class="t" style="left:591.00px;top:326.37px;font-size:9.6px;color:#1d1d1d;-webkit-text-stroke:0.2px;transform:scaleX(0.9406);transform-origin:0 0;">Actuals</span>
<div class="a" style="left:446.5px;top:336.8px;width:190.0px;height:13.2px;background:#ffffff;"></div>
<div class="a" style="left:446.5px;top:336.3px;width:190.0px;height:1px;background:#c6d2ee;"></div>
<span class="t" style="left:471.90px;top:339.57px;font-size:9.6px;color:#7f7f7f;transform:scaleX(0.9277);transform-origin:0 0;">2020</span>
<span class="t" style="left:495.70px;top:339.57px;font-size:9.6px;color:#1d1d1d;-webkit-text-stroke:0.2px;transform:scaleX(0.8384);transform-origin:0 0;">East</span>
<span class="t" style="left:549.57px;top:339.57px;font-size:9.6px;color:#1d1d1d;-webkit-text-stroke:0.2px;letter-spacing:-0.270px;">58138.25</span>
<span class="t" style="left:591.00px;top:339.57px;font-size:9.6px;color:#1d1d1d;-webkit-text-stroke:0.2px;transform:scaleX(0.9406);transform-origin:0 0;">Actuals</span>
<div class="a" style="left:446.5px;top:350.0px;width:190.0px;height:13.2px;background:#d9e1f2;"></div>
<div class="a" style="left:446.5px;top:349.5px;width:190.0px;height:1px;background:#c6d2ee;"></div>
<span class="t" style="left:471.90px;top:352.77px;font-size:9.6px;color:#7f7f7f;transform:scaleX(0.9277);transform-origin:0 0;">2020</span>
<span class="t" style="left:495.70px;top:352.77px;font-size:9.6px;color:#1d1d1d;-webkit-text-stroke:0.2px;transform:scaleX(0.8384);transform-origin:0 0;">East</span>
<span class="t" style="left:549.57px;top:352.77px;font-size:9.6px;color:#1d1d1d;-webkit-text-stroke:0.2px;letter-spacing:-0.270px;">70452.45</span>
<span class="t" style="left:591.00px;top:352.77px;font-size:9.6px;color:#1d1d1d;-webkit-text-stroke:0.2px;transform:scaleX(0.9406);transform-origin:0 0;">Actuals</span>
<div class="a" style="left:446.5px;top:363.2px;width:190.0px;height:13.2px;background:#ffffff;"></div>
<div class="a" style="left:446.5px;top:362.7px;width:190.0px;height:1px;background:#c6d2ee;"></div>
<span class="t" style="left:471.90px;top:365.97px;font-size:9.6px;color:#7f7f7f;transform:scaleX(0.9277);transform-origin:0 0;">2020</span>
<span class="t" style="left:495.70px;top:365.97px;font-size:9.6px;color:#1d1d1d;-webkit-text-stroke:0.2px;transform:scaleX(0.8384);transform-origin:0 0;">East</span>
<span class="t" style="left:549.57px;top:365.97px;font-size:9.6px;color:#1d1d1d;-webkit-text-stroke:0.2px;letter-spacing:-0.270px;">76172.55</span>
<span class="t" style="left:591.00px;top:365.97px;font-size:9.6px;color:#1d1d1d;-webkit-text-stroke:0.2px;transform:scaleX(0.9406);transform-origin:0 0;">Actuals</span>
<div class="a" style="left:446.5px;top:376.4px;width:190.0px;height:13.2px;background:#d9e1f2;"></div>
<div class="a" style="left:446.5px;top:375.9px;width:190.0px;height:1px;background:#c6d2ee;"></div>
<span class="t" style="left:471.90px;top:379.17px;font-size:9.6px;color:#7f7f7f;transform:scaleX(0.9277);transform-origin:0 0;">2020</span>
<span class="t" style="left:495.70px;top:379.17px;font-size:9.6px;color:#1d1d1d;-webkit-text-stroke:0.2px;transform:scaleX(0.8384);transform-origin:0 0;">East</span>
<span class="t" style="left:549.57px;top:379.17px;font-size:9.6px;color:#1d1d1d;-webkit-text-stroke:0.2px;letter-spacing:-0.270px;">68637.75</span>
<span class="t" style="left:591.00px;top:379.17px;font-size:9.6px;color:#1d1d1d;-webkit-text-stroke:0.2px;transform:scaleX(0.9406);transform-origin:0 0;">Actuals</span>
<div class="a" style="left:446.0px;top:218px;width:0.8px;height:171.6px;background:#c9e0b8;"></div>
<div class="a" style="left:636.0px;top:218px;width:0.8px;height:171.6px;background:#d5e5cc;"></div>
<svg class="a" style="left:633.3px;top:386.2px" width="3.2" height="3.2" viewBox="0 0 3.2 3.2" fill="none"><path d="M3.2 0V3.2H0Z" fill="#2f5bb0"/></svg>
<div class="a" style="left:0px;top:647px;width:1024px;height:22px;background:#f0f0f0;"></div>
<svg class="a" style="left:0px;top:647px" width="1024" height="22" viewBox="0 0 1024 22" fill="none"><rect x="204.3" y="3" width="57.2" height="16.7" rx="3.5" fill="#fff2cc"/><rect x="267.7" y="3" width="74.9" height="16.7" rx="3.5" fill="#ddebf7"/><rect x="348.7" y="3" width="95.3" height="16.7" rx="3.5" fill="#ddebf7"/><rect x="517.4" y="3" width="106.9" height="16.7" rx="3.5" fill="#a9d08e"/><rect x="630.7" y="3" width="43.2" height="16.7" rx="3.5" fill="#f8cbad"/><rect x="679.8" y="3" width="43.2" height="16.7" rx="3.5" fill="#f8cbad"/><rect x="729.4" y="3" width="47.3" height="16.7" rx="3.5" fill="#f8cbad"/><rect x="783.7" y="3" width="136.3" height="16.7" rx="3.5" fill="#f4b183"/><path d="M930.8 3H996.6V19.7H930.8Q927.3 19.7 927.3 16.2V6.5Q927.3 3 930.8 3Z" fill="#f4b183"/><path d="M102.4 5.5V17" stroke="#dcdcdc" stroke-width="1"/><path d="M155.7 5.5V17" stroke="#dcdcdc" stroke-width="1"/><path d="M201.4 5.5V17" stroke="#dcdcdc" stroke-width="1"/><path d="M265.8 5.5V17" stroke="#dcdcdc" stroke-width="1"/><path d="M345.4 5.5V17" stroke="#dcdcdc" stroke-width="1"/><path d="M447 5.5V17" stroke="#dcdcdc" stroke-width="1"/><path d="M513.9 5.5V17" stroke="#dcdcdc" stroke-width="1"/><path d="M627.5 5.5V17" stroke="#dcdcdc" stroke-width="1"/><path d="M676.8 5.5V17" stroke="#dcdcdc" stroke-width="1"/><path d="M726.3 5.5V17" stroke="#dcdcdc" stroke-width="1"/><path d="M780.3 5.5V17" stroke="#dcdcdc" stroke-width="1"/><path d="M923.8 5.5V17" stroke="#dcdcdc" stroke-width="1"/><circle cx="1004.3" cy="11.3" r="0.85" fill="#333"/><circle cx="1007.1999999999999" cy="11.3" r="0.85" fill="#333"/><circle cx="1010.0999999999999" cy="11.3" r="0.85" fill="#333"/></svg>
<span class="t" style="left:68.40px;top:653.77px;font-size:9.6px;color:#3d3d3d;-webkit-text-stroke:0.2px;letter-spacing:-0.248px;">Cover</span>
<span class="t" style="left:112.00px;top:653.77px;font-size:9.6px;color:#3d3d3d;-webkit-text-stroke:0.2px;letter-spacing:-0.096px;">Settings</span>
<span class="t" style="left:165.30px;top:653.77px;font-size:9.6px;color:#3d3d3d;-webkit-text-stroke:0.2px;letter-spacing:0.092px;">Inputs</span>
<span class="t" style="left:210.80px;top:653.77px;font-size:9.6px;color:#3d3d3d;-webkit-text-stroke:0.2px;letter-spacing:-0.075px;">PathDemo</span>
<span class="t" style="left:275.00px;top:653.77px;font-size:9.6px;color:#3d3d3d;-webkit-text-stroke:0.2px;letter-spacing:-0.105px;">tblActuals_CM</span>
<span class="t" style="left:356.00px;top:653.77px;font-size:9.6px;color:#3d3d3d;-webkit-text-stroke:0.2px;letter-spacing:-0.108px;">tblActuals_CMDate</span>
<div class="a" style="left:450px;top:647px;width:61px;height:19px;background:linear-gradient(#fdfdfc 35%,#e1efd9);border-radius:0 0 4px 4px;box-shadow:0 1px 1.5px #c4c4c4"></div>
<span class="t" style="left:455.80px;top:651.87px;font-size:9.6px;color:#2a2a2a;font-weight:700;letter-spacing:-0.280px;">LinkedData</span>
<div class="a" style="left:455.8px;top:663.2px;width:49.2px;height:1.6px;background:#3f9a5a;border-radius:1px;"></div>
<span class="t" style="left:524.70px;top:653.77px;font-size:9.6px;color:#3d3d3d;-webkit-text-stroke:0.2px;letter-spacing:-0.017px;">LinkedDataAppended</span>
<span class="t" style="left:637.00px;top:653.77px;font-size:9.6px;color:#3d3d3d;-webkit-text-stroke:0.2px;letter-spacing:0.016px;">Budget</span>
<span class="t" style="left:686.60px;top:653.77px;font-size:9.6px;color:#3d3d3d;-webkit-text-stroke:0.2px;letter-spacing:-0.178px;">Actuals</span>
<span class="t" style="left:735.80px;top:653.77px;font-size:9.6px;color:#3d3d3d;-webkit-text-stroke:0.2px;transform:scaleX(0.9430);transform-origin:0 0;">Forecast</span>
<span class="t" style="left:791.30px;top:653.77px;font-size:9.6px;color:#3d3d3d;-webkit-text-stroke:0.2px;letter-spacing:-0.098px;">CombinedFinancials_Filtered</span>
<span class="t" style="left:934.60px;top:653.77px;font-size:9.6px;color:#3d3d3d;-webkit-text-stroke:0.2px;letter-spacing:-0.091px;">CombinedFina</span>
<svg class="a" style="left:1px;top:653px" width="7" height="10" viewBox="0 0 7 10" fill="none"><path d="M5 2L2 5L5 8" stroke="#b8b8b8" stroke-width="1"/></svg>
<svg class="a" style="left:23px;top:653px" width="7" height="10" viewBox="0 0 7 10" fill="none"><path d="M2 2L5.2 5L2 8" stroke="#444" stroke-width="1"/></svg>
<svg class="a" style="left:0;top:0" width="1024" height="669" viewBox="0 0 1024 669" fill="none" stroke-linecap="butt" stroke-linejoin="miter"><ellipse cx="15.5" cy="30.3" rx="7" ry="2.5" stroke="#484848" stroke-width="1" fill="none"/><path d="M8.5 30.3V44.2C8.5 45.4 11 46.5 15 46.6M22.5 30.3V36.8" stroke="#484848" stroke-width="1" fill="none" /><rect x="16.6" y="37.8" width="10" height="10.4" stroke="#484848" stroke-width="1" fill="#fdfdfd" rx="0"/><path d="M16.6 40.6H26.6M16.6 43.2H26.6M16.6 45.7H26.6M20 40.4V48M23.3 40.4V48" stroke="#707070" stroke-width="0.6" fill="none" /><rect x="17.1" y="38.3" width="9" height="2" stroke="none" stroke-width="1" fill="#9a9a9a" rx="0"/><path d="M23.7 66.75L25.4 68.44999999999999L27.099999999999998 66.75" stroke="#3a3a3a" stroke-width="1.1" fill="none" /><path d="M40.5 27.8H36.7V38H40.6M40.5 27.8L44.6 31.6M40.5 27.8V31.6H44.6" stroke="#484848" stroke-width="1" fill="none" /><rect x="41.2" y="32.4" width="4.2" height="5.6" stroke="#484848" stroke-width="1" fill="#fdfdfd" rx="0"/><path d="M43.3 32.4V38" stroke="#484848" stroke-width="0.8" fill="none" /><path d="M40.5 45.8H36.7V56H39.6M40.5 45.8L44.4 49.4M40.5 45.8V49.4H44.4" stroke="#484848" stroke-width="1" fill="none" /><circle cx="42.7" cy="53.3" r="3.2" stroke="none" stroke-width="1" fill="#2b88d8"/><path d="M42.7 50.3V56.3M39.7 53.3H45.7" stroke="#9fd0f5" stroke-width="0.6" fill="none" /><rect x="35.3" y="63.6" width="10" height="10" stroke="#484848" stroke-width="1" fill="#fdfdfd" rx="0"/><path d="M35.3 66.4H45.3M35.3 68.9H45.3M35.3 71.3H45.3M38.6 66.4V73.6M42 66.4V73.6" stroke="#707070" stroke-width="0.6" fill="none" /><rect x="35.8" y="64.1" width="9" height="2" stroke="none" stroke-width="1" fill="#8c98a6" rx="0"/><circle cx="38" cy="65.1" r="0.7" stroke="none" stroke-width="1" fill="#2b88d8"/><circle cx="42.6" cy="65.1" r="0.7" stroke="none" stroke-width="1" fill="#2b88d8"/><rect x="126.3" y="28.4" width="10" height="9.2" stroke="#484848" stroke-width="1" fill="#fdfdfd" rx="0"/><path d="M126.3 31H136.3M126.3 34.2H131M129.6 28.4V37.6M133 28.4V33" stroke="#707070" stroke-width="0.6" fill="none" /><rect x="130.3" y="33.2" width="6.6" height="5" stroke="none" stroke-width="1" fill="#2b88d8" rx="0.8"/><circle cx="133.6" cy="35.8" r="1.4" stroke="#e8f4ff" stroke-width="0.7" fill="none"/><path d="M190.10000000000002 32.35L191.8 34.050000000000004L193.5 32.35" stroke="#3a3a3a" stroke-width="1.1" fill="none" /><path d="M131.3 45.8H127.4V56H130.6M131.3 45.8L135.4 49.6M131.3 45.8V49.6H134.5" stroke="#484848" stroke-width="1" fill="none" /><circle cx="133.8" cy="52.9" r="3" stroke="#2b88d8" stroke-width="1.1" fill="#fdfdfd"/><path d="M133.8 51.2V53H135.2" stroke="#555" stroke-width="0.7" fill="none" /><path d="M131.3 63.6H127.4V74H130.6M131.3 63.6L135.4 67.4M131.3 63.6V67" stroke="#484848" stroke-width="1" fill="none" /><rect x="131.6" y="67.8" width="5" height="6.2" stroke="#e9815a" stroke-width="1.1" fill="#fdfdfd" rx="1.2"/><rect x="131.6" y="67.8" width="5" height="2" stroke="#e9815a" stroke-width="1.1" fill="#e9815a" rx="1"/><path d="M243.8 45.5H241.6V28.4H250.5" stroke="#484848" stroke-width="1" fill="none" /><path d="M252 30.2H244.2V46.8H250M252 30.2L256.6 34.8V37.5M252 30.2V34.8H256.6" stroke="#484848" stroke-width="1" fill="none" /><circle cx="255" cy="43.7" r="5.2" stroke="none" stroke-width="1" fill="#fdfdfd"/><path d="M250.5 43A4.6 4.6 0 0 1 258.9 41.3" stroke="#45b368" stroke-width="1.15" fill="none" /><path d="M259.5 44.4A4.6 4.6 0 0 1 251.1 46.1" stroke="#45b368" stroke-width="1.15" fill="none" /><path d="M259.4 38.9V41.7H256.6" stroke="#45b368" stroke-width="1.05" fill="none" /><path d="M250.6 48.5V45.7H253.4" stroke="#45b368" stroke-width="1.05" fill="none" /><path d="M252.9 66.95L254.6 68.64999999999999L256.3 66.95" stroke="#3a3a3a" stroke-width="1.1" fill="none" /><rect x="268.6" y="28.6" width="10.8" height="8.6" stroke="#333" stroke-width="1.1" fill="#fdfdfd" rx="0"/><rect x="268.6" y="28.3" width="10.8" height="1.8" stroke="none" stroke-width="1" fill="#333" rx="0"/><path d="M275 30V37" stroke="#333" stroke-width="0.9" fill="none" /><rect x="275.8" y="30.6" width="2" height="5.8" stroke="none" stroke-width="1" fill="#2b88d8" rx="0"/><rect x="270.2" y="45.6" width="7.8" height="10.4" stroke="#bdbdbd" stroke-width="1" fill="none" rx="0"/><path d="M272 48.8H273.2M274.4 48.8H276.4M272 51H273.2M274.4 51H276.4M272 53.2H273.2M274.4 53.2H276.4" stroke="#bdbdbd" stroke-width="0.9" fill="none" /><path d="M274.2 63.6H270.2V74H272M274.2 63.6L278 67.2V69M274.2 63.6V67.2H278" stroke="#bdbdbd" stroke-width="1" fill="none" /><ellipse cx="275" cy="72.4" rx="1.9" ry="1.5" stroke="#bdbdbd" stroke-width="1" fill="none"/><ellipse cx="277.4" cy="72.4" rx="1.9" ry="1.5" stroke="#bdbdbd" stroke-width="1" fill="none"/><path d="M607.5 38.1L609.5 36.1L611.5 38.1" stroke="#c4c4c4" stroke-width="0.9" fill="none" /><path d="M607.5 50.2L609.5 52.2L611.5 50.2" stroke="#c4c4c4" stroke-width="0.9" fill="none" /><path d="M607.2 62.9H611.8" stroke="#333" stroke-width="1.1" fill="none" /><path d="M607.7 64.7L609.5 66.5L611.3 64.7" stroke="#333" stroke-width="1.1" fill="none" /><rect x="405.2" y="40.2" width="19.2" height="11.8" stroke="#484848" stroke-width="1" fill="none" rx="1"/><path d="M411.6 40.2V38.6H417.8V40.2M405.2 46.4H413.6M415.8 46.4H424.4" stroke="#484848" stroke-width="1" fill="none" /><rect x="413.7" y="45.2" width="2.1" height="2.6" stroke="#484848" stroke-width="0.9" fill="none" rx="0"/><path d="M459.4 42.2L468.2 37.4L477.2 42.2Z" stroke="#484848" stroke-width="1" fill="none" /><path d="M459.2 52.6H477.4M460.4 51H476.2" stroke="#484848" stroke-width="1.1" fill="none" /><path d="M461.8 43V50.6M466 43V50.6M470.4 43V50.6M474.6 43V50.6" stroke="#484848" stroke-width="1.3" fill="none" /><rect x="512.8" y="39.4" width="19.4" height="12" stroke="#484848" stroke-width="1.2" fill="none" rx="0"/><rect x="514.4" y="41" width="16.2" height="8.8" stroke="#8a8a8a" stroke-width="0.6" fill="none" rx="0"/><ellipse cx="522.5" cy="45.2" rx="3.2" ry="4.1" stroke="#484848" stroke-width="1" fill="none"/><rect x="523.8" y="46.6" width="10" height="10" stroke="none" stroke-width="1" fill="#fdfdfd" rx="2"/><ellipse cx="528.9" cy="48" rx="4.6" ry="1.5" stroke="#484848" stroke-width="1" fill="#fdfdfd"/><path d="M524.3 48V54.6C524.3 55.6 526.4 56.3 528.9 56.3C531.4 56.3 533.5 55.6 533.5 54.6V48" stroke="#484848" stroke-width="1" fill="none" /><path d="M524.3 50.2C524.6 51.2 526.6 51.8 528.9 51.8C531.2 51.8 533.2 51.2 533.5 50.2M524.3 52.4C524.6 53.4 526.6 54 528.9 54C531.2 54 533.2 53.4 533.5 52.4" stroke="#484848" stroke-width="1" fill="none" /><path d="M566.7 40.9L573.1 37.5L579.7 40.9L585.8 37.5V49.4L579.7 52.9L573.1 49.4L566.7 52.9ZM573.1 37.5V49.4M579.7 40.9V52.9" stroke="#484848" stroke-width="1" fill="none" /><text x="630.6" y="37.6" font-family="Liberation Sans" font-weight="700" font-size="6.6" fill="#2b88d8">A</text><text x="630.9" y="44" font-family="Liberation Sans" font-weight="700" font-size="6.6" fill="#333">Z</text><path d="M639.3 32.8V43.4M637 41L639.3 43.5L641.6 41" stroke="#484848" stroke-width="1" fill="none" /><text x="630.9" y="60" font-family="Liberation Sans" font-weight="700" font-size="6.6" fill="#333">Z</text><text x="630.6" y="66" font-family="Liberation Sans" font-weight="700" font-size="6.6" fill="#2b88d8">A</text><path d="M639.3 55V65.8M637 63.4L639.3 65.9L641.6 63.4" stroke="#484848" stroke-width="1" fill="none" /><rect x="651.2" y="28.4" width="18.8" height="18.6" stroke="#333" stroke-width="1.1" fill="none" rx="0"/><path d="M651.2 30.8H670" stroke="#333" stroke-width="1.3" fill="none" /><path d="M660.6 31V47" stroke="#333" stroke-width="1" fill="none" /><text x="653.3" y="38.3" font-family="Liberation Sans" font-weight="700" font-size="6.9" fill="#555">Z</text><text x="653" y="45" font-family="Liberation Sans" font-weight="700" font-size="7" fill="#2b88d8">A</text><text x="662.6" y="38.3" font-family="Liberation Sans" font-weight="700" font-size="7" fill="#2b88d8">A</text><text x="662.9" y="45" font-family="Liberation Sans" font-weight="700" font-size="6.9" fill="#555">Z</text><path d="M689.4 28.6H707.6V31.2L700.8 38.4V46.8H696.3V38.4L689.4 31.2Z" stroke="#484848" stroke-width="1.2" fill="none" /><path d="M717.8 27.8H728.5999999999999V29.2L724.4 33.4V36.2M717.8 27.8V29.2L722.0999999999999 33.4V38.0" stroke="#bdbdbd" stroke-width="1" fill="none" /><path d="M725.2 34.2L728.4 37.4M728.4 34.2L725.2 37.4" stroke="#bdbdbd" stroke-width="0.9" fill="none" /><path d="M717.8 45.6H728.5999999999999V47.0L724.4 51.2V54.0M717.8 45.6V47.0L722.0999999999999 51.2V55.8" stroke="#bdbdbd" stroke-width="1" fill="none" /><path d="M724.4 53.4A2.4 2.4 0 1 1 727 55.4M728.6 51.4V53.2H726.8" stroke="#bdbdbd" stroke-width="0.9" fill="none" /><circle cx="726.4" cy="53.2" r="3" stroke="none" stroke-width="1" fill="#fdfdfd"/><path d="M724.2 53.6A2.3 2.3 0 1 0 725.6 51.2M724.6 50.2V51.8H726.2" stroke="#bdbdbd" stroke-width="0.9" fill="none" /><path d="M717.8 63.6H728.5999999999999V65.0L724.4 69.2V72.0M717.8 63.6V65.0L722.0999999999999 69.2V73.8" stroke="#333" stroke-width="1" fill="none" /><circle cx="725.4" cy="70.9" r="3.4" stroke="none" stroke-width="1" fill="#fdfdfd"/><path d="M725.4 67.7V74.1M722.2 70.9H728.6M723.1 68.6L727.7 73.2M727.7 68.6L723.1 73.2" stroke="#3d94dc" stroke-width="1.1" fill="none" /><circle cx="725.4" cy="70.9" r="1.9" stroke="#3d94dc" stroke-width="1.2" fill="#3d94dc"/><circle cx="725.4" cy="70.9" r="0.8" stroke="none" stroke-width="1" fill="#d8ecfb"/><path d="M794.2 30.8H803.2M794.2 33.5H803.2M797 36.2H803.2" stroke="#555" stroke-width="1" fill="none" /><rect x="805.6" y="28.4" width="7" height="18.6" stroke="#484848" stroke-width="1" fill="none" rx="0"/><path d="M805.6 34.5H812.6M805.6 40.8H812.6" stroke="#484848" stroke-width="1" fill="none" /><path d="M808 31.5H810.2M808 37.6H810.2M808 43.9H810.2" stroke="#2b88d8" stroke-width="1.1" fill="none" /><path d="M794.6 36.6C791.6 38 791 41.4 793.4 43.2C795 44.4 797.6 44.4 800 44.2" stroke="#3d94dc" stroke-width="1.1" fill="none" /><path d="M797.8 41.6L800.6 44.2L797.6 46.8" stroke="#3d94dc" stroke-width="1.1" fill="none" /><rect x="825.4" y="29" width="10.2" height="8.6" stroke="#484848" stroke-width="1" fill="#fdfdfd" rx="0"/><path d="M825.4 32H835.6M825.4 34.8H835.6M828.8 29V37.6M832.2 29V37.6" stroke="#707070" stroke-width="0.6" fill="none" /><rect x="829.2" y="32.3" width="2.8" height="5" stroke="none" stroke-width="1" fill="#2b88d8" rx="0"/><rect x="829.2" y="29.4" width="2.8" height="2.4" stroke="none" stroke-width="1" fill="#7db9ea" rx="0"/><path d="M827.6 26.6L825 31H827L825.6 34.2L829.4 29.6H827.4L829.2 26.6Z" stroke="none" stroke-width="1" fill="#e8643c" /><rect x="826.7" y="45.5" width="8" height="10.4" stroke="#3d94dc" stroke-width="1" fill="#fdfdfd" rx="0.8"/><rect x="826.7" y="45.5" width="8" height="2.6" stroke="none" stroke-width="1" fill="#3d94dc" rx="0.8"/><path d="M828 46.8H833.4" stroke="#a8d2f3" stroke-width="0.7" fill="none" stroke-dasharray="1.2 0.9"/><path d="M826.7 51.5H834.7" stroke="#3d94dc" stroke-width="0.9" fill="none" /><rect x="826.7" y="51.5" width="4" height="4.4" stroke="none" stroke-width="1" fill="#3d94dc" rx="0.6"/><rect x="830.9" y="51.1" width="5.6" height="5.8" stroke="none" stroke-width="1" fill="#fdfdfd" rx="0"/><path d="M831.6 51.8L835.8 56.2M835.8 51.8L831.6 56.2" stroke="#e8442e" stroke-width="1.1" fill="none" /><path d="M829 63.8H825.4V66.6H829M825.4 70H829.4M825.4 70V73.4H828.8" stroke="#484848" stroke-width="1" fill="none" /><path d="M830.2 64.8L831.8 66.4L835.4 63.2" stroke="#3aaa5c" stroke-width="1.1" fill="none" /><circle cx="832.8" cy="71.8" r="2.7" stroke="#e8442e" stroke-width="1.2" fill="#fdfdfd"/><path d="M830.9 69.9L834.7 73.7" stroke="#e8442e" stroke-width="1.1" fill="none" /><path d="M904.1999999999999 68.35000000000001L905.9 70.05L907.6 68.35000000000001" stroke="#3a3a3a" stroke-width="1.1" fill="none" /><rect x="920.4" y="28.2" width="4.4" height="3.6" stroke="#484848" stroke-width="1" fill="none" rx="0"/><rect x="920.4" y="33.2" width="4.4" height="3.6" stroke="#484848" stroke-width="1" fill="none" rx="0"/><path d="M922.6 32.5H926.4" stroke="#2b88d8" stroke-width="1" fill="none" /><path d="M923.6 31.2L922.2 32.5L923.6 33.8" stroke="#2b88d8" stroke-width="0.9" fill="none" /><rect x="926.8" y="30.8" width="4.2" height="3.2" stroke="#2b88d8" stroke-width="1.1" fill="#9fd0f5" rx="0"/><rect x="920.4" y="48.4" width="4.4" height="3.6" stroke="#484848" stroke-width="1" fill="none" rx="0"/><path d="M922.6 48.4V52" stroke="#484848" stroke-width="0.7" fill="none" /><rect x="926.8" y="45.6" width="4" height="4" stroke="#484848" stroke-width="1" fill="none" rx="0"/><rect x="926.8" y="51.8" width="4" height="4.2" stroke="#484848" stroke-width="1" fill="none" rx="0"/><path d="M924.8 50.2H926M926 50.2V47.6H926.8M926 50.2V53.8H926.8" stroke="#484848" stroke-width="0.8" fill="none" /><path d="M920.2 66L925.4 63.6L931 66V71.6L925.4 74L920.2 71.6Z" stroke="#5aa02c" stroke-width="1" fill="#7cbf4a" /><path d="M920.2 66L925.6 68.4L931 66M925.6 68.4V74" stroke="#e4f3d6" stroke-width="0.6" fill="none" /><path d="M922 67.6V72.6M923.8 68.4V73.4M927.4 68.4V73.4M929.2 67.6V72.6M920.4 68.6L925.6 71M920.4 70.2L925.6 72.6M925.6 71L931 68.6M925.6 72.6L931 70.2" stroke="#e4f3d6" stroke-width="0.45" fill="none" /><path d="M197.4 140.2C201 137.6 206 136.8 210.2 137.4L214 146.6V158.2L197.4 151.6Z" stroke="#4a4a4a" stroke-width="0.9" fill="none" /><path d="M197.4 140.2L214 146.6" stroke="#4a4a4a" stroke-width="0.8" fill="none" /><path d="M197.6 141.9L214 148.3M197.6 143.1L214 149.5" stroke="#4a4a4a" stroke-width="0.8" fill="none" /><path d="M197.6 147.4L214 153.6M197.6 148.6L214 154.8" stroke="#4a4a4a" stroke-width="0.8" fill="none" /><path d="M199.4 141V152.2" stroke="#4a4a4a" stroke-width="0.6" fill="none" /><path d="M250.5 149.3A8.9 8.9 0 0 1 267.8 144.2" stroke="#4a4a4a" stroke-width="0.95" fill="none" /><path d="M268.6 146.3A8.9 8.9 0 0 1 251.3 152.4" stroke="#4a4a4a" stroke-width="0.95" fill="none" /><path d="M246.9 146.3L250.5 149.5L254.5 146.7" stroke="#4a4a4a" stroke-width="0.95" fill="none" /><path d="M264.6 150L268.6 146.3L271.6 150" stroke="#4a4a4a" stroke-width="0.95" fill="none" /><circle cx="312.8" cy="147.8" r="10.4" stroke="#4a4a4a" stroke-width="0.95" fill="none"/><path d="M312.8 143.1V152.6M308 147.8H317.7" stroke="#4a4a4a" stroke-width="0.95" fill="none" /><path d="M601.4 139.2L619.2 156.8M619.2 139.2L601.4 156.8" stroke="#4a4a4a" stroke-width="0.95" fill="none" /><path d="M866.6 266V276.8L869.3 274.6L871.2 278.6L873 277.8L871.2 274L875.2 273.8Z" stroke="#7c7c7c" stroke-width="0.85" fill="#fff" /><path d="M90.3 199.0L91.9 200.5L95 197.3" stroke="#555" stroke-width="0.9" fill="none" /><path d="M96.4 199.3H101.8" stroke="#555" stroke-width="1" fill="none" /><path d="M90.3 202.55L91.9 204.05L95 200.85000000000002" stroke="#555" stroke-width="0.9" fill="none" /><path d="M96.4 202.85000000000002H101.8" stroke="#555" stroke-width="1" fill="none" /><path d="M90.3 206.1L91.9 207.6L95 204.4" stroke="#555" stroke-width="0.9" fill="none" /><path d="M96.4 206.4H101.8" stroke="#555" stroke-width="1" fill="none" /><path d="M112.3 197.5H122.7V198.8L118 203.2V204.6M112.3 197.5V198.8L116.6 203.2V208" stroke="#bfbfbf" stroke-width="0.95" fill="none" /><path d="M119.4 204.2L122.7 207.5M122.7 204.2L119.4 207.5" stroke="#b4b4b4" stroke-width="0.85" fill="none" /><path d="M90.3 317.0L91.9 318.5L95 315.3" stroke="#555" stroke-width="0.9" fill="none" /><path d="M96.4 317.3H101.8" stroke="#555" stroke-width="1" fill="none" /><path d="M90.3 320.55L91.9 322.05L95 318.85" stroke="#555" stroke-width="0.9" fill="none" /><path d="M96.4 320.85H101.8" stroke="#555" stroke-width="1" fill="none" /><path d="M90.3 324.1L91.9 325.6L95 322.40000000000003" stroke="#555" stroke-width="0.9" fill="none" /><path d="M96.4 324.40000000000003H101.8" stroke="#555" stroke-width="1" fill="none" /><path d="M112.3 315.5H122.7V316.8L118 321.2V322.6M112.3 315.5V316.8L116.6 321.2V326" stroke="#bfbfbf" stroke-width="0.95" fill="none" /><path d="M119.4 322.2L122.7 325.5M122.7 322.2L119.4 325.5" stroke="#b4b4b4" stroke-width="0.85" fill="none" /><path d="M90.3 437.3L91.9 438.8L95 435.6" stroke="#555" stroke-width="0.9" fill="none" /><path d="M96.4 437.6H101.8" stroke="#555" stroke-width="1" fill="none" /><path d="M90.3 440.85L91.9 442.35L95 439.15000000000003" stroke="#555" stroke-width="0.9" fill="none" /><path d="M96.4 441.15000000000003H101.8" stroke="#555" stroke-width="1" fill="none" /><path d="M90.3 444.40000000000003L91.9 445.90000000000003L95 442.70000000000005" stroke="#555" stroke-width="0.9" fill="none" /><path d="M96.4 444.70000000000005H101.8" stroke="#555" stroke-width="1" fill="none" /><path d="M112.3 435.8H122.7V437.1L118 441.5V442.90000000000003M112.3 435.8V437.1L116.6 441.5V446.3" stroke="#bfbfbf" stroke-width="0.95" fill="none" /><path d="M119.4 442.5L122.7 445.8M122.7 442.5L119.4 445.8" stroke="#b4b4b4" stroke-width="0.85" fill="none" /><path d="M793 597.8H817.4V601H796.2V618.5H793Z" stroke="none" stroke-width="1" fill="#d6d6d6" /><path d="M817.6 606.8H820.8V625H808V621.8H817.6Z" stroke="none" stroke-width="1" fill="#d6d6d6" /><path d="M793 617L800.6 604.4L803.6 606L793 623.4Z" stroke="none" stroke-width="1" fill="#80b8e2" /><path d="M794 625.4L808.2 603.2L811.4 605L798.4 625.4Z" stroke="none" stroke-width="1" fill="#80b8e2" /><path d="M802.4 625.4L820.6 598.2L818.6 596.6L826.4 593.4L825.6 601.6L823.6 600L806.8 625.4Z" stroke="none" stroke-width="1" fill="#80b8e2" /><path d="M831 615.2H957.2" stroke="#cacaca" stroke-width="1" fill="none" /></svg>
<span class="t" style="left:831.00px;top:596.33px;font-size:17.8px;color:#80b8e2;font-weight:700;transform:scaleX(0.9684);transform-origin:0 0;">Excel</span>
<span class="t" style="left:881.20px;top:596.33px;font-size:17.8px;color:#cdcdcd;font-weight:700;">&amp;</span>
<span class="t" style="left:899.20px;top:596.33px;font-size:17.8px;color:#80b8e2;font-weight:700;transform:scaleX(0.9310);transform-origin:0 0;">Access</span>
<span class="t" style="left:831.00px;top:618.72px;font-size:8.6px;color:#c6c6c6;transform:scaleX(0.9183);transform-origin:0 0;">Microsoft Excel and Access Experts</span>
</div></body></html>
